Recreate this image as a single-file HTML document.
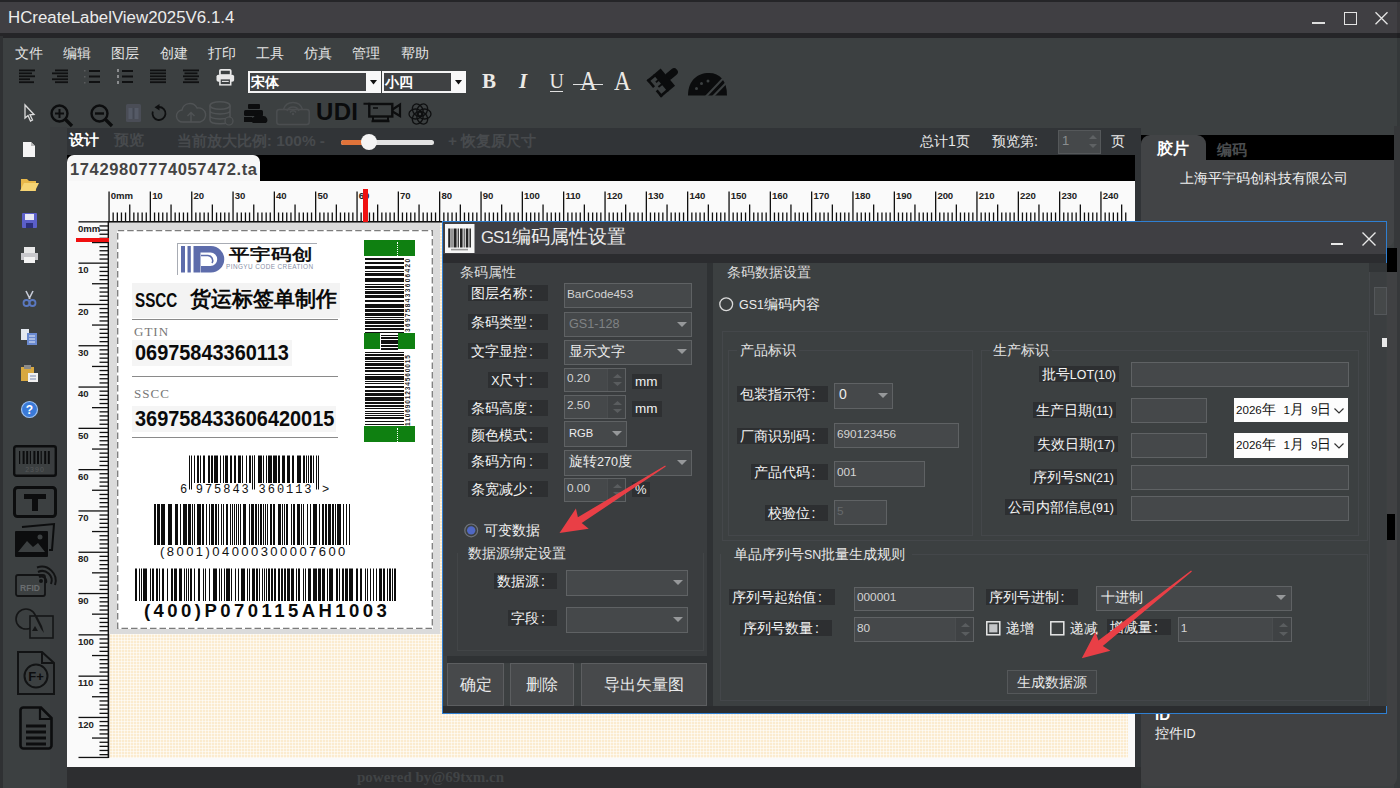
<!DOCTYPE html>
<html><head><meta charset="utf-8"><title>HCreateLabelView</title><style>
*{box-sizing:border-box;margin:0;padding:0}
html,body{width:1400px;height:788px;overflow:hidden;background:#3c4041;font-family:"Liberation Sans",sans-serif;color:#e6e6e6}
.a{position:absolute}
.t{position:absolute;white-space:nowrap;line-height:1}
.lbl{position:absolute;white-space:nowrap;line-height:16px;height:16px;font-size:14.1px;color:#f4f4f4;background:#2d2f31;text-align:right}
.inp{position:absolute;border:1px solid #5f6264;background:#45484a;font-size:11.8px;color:#d4d4d4;white-space:nowrap;padding-left:2px}
.cmb{position:absolute;border:1px solid #5f6264;background:#45484a;font-size:14px;color:#ededed;white-space:nowrap;padding-left:4px}
.cmb:after{content:"";position:absolute;right:4.500px;top:50%;margin-top:-3px;border:5px solid transparent;border-top:5.5px solid #96989a;border-bottom:0}
.spn:after{content:"";position:absolute;right:0;top:0;bottom:0;width:17.5px;background:#3f4244;border-left:1px solid #4a4d4f}
.btn{position:absolute;background:#47494b;border:1px solid #5c5e60;color:#e8e8e8;text-align:center;white-space:nowrap}
svg{position:absolute;overflow:visible}
</style></head><body>
<div class="a" style="left:0px;top:0px;width:1400px;height:37.5px;background:#252528"></div>
<div class="a" style="left:0px;top:2.3px;width:1400px;height:31.2px;background:#403f43"></div>
<div class="a" style="left:1397px;top:2.3px;width:3px;height:786px;background:rgba(0,0,0,.12)"></div>
<div class="t" style="left:8px;top:10px;font-size:16.85px;color:#ececec;">HCreateLabelView2025V6.1.4</div>
<div class="a" style="left:1312.3px;top:22px;width:12.5px;height:2.2px;background:#dedede"></div>
<div class="a" style="left:1343.8px;top:12px;width:13px;height:12.6px;border:1.5px solid #e4e4e4"></div>
<svg style="left:1375.4px;top:12px;" width="13" height="12.6" viewBox="0 0 13 12.6"><path d="M0.5 0.3L12.5 12.300M12.500 0.300L0.500 12.300" stroke="#e4e4e4" stroke-width="1.3"/></svg>
<div class="a" style="left:0px;top:36px;width:3px;height:752px;background:#2f3133"></div>
<div class="t" style="left:15.0px;top:46.5px;font-size:13.6px;color:#e4e4e4;">文件</div>
<div class="t" style="left:63.2px;top:46.5px;font-size:13.6px;color:#e4e4e4;">编辑</div>
<div class="t" style="left:111.4px;top:46.5px;font-size:13.6px;color:#e4e4e4;">图层</div>
<div class="t" style="left:159.60000000000002px;top:46.5px;font-size:13.6px;color:#e4e4e4;">创建</div>
<div class="t" style="left:207.8px;top:46.5px;font-size:13.6px;color:#e4e4e4;">打印</div>
<div class="t" style="left:256.0px;top:46.5px;font-size:13.6px;color:#e4e4e4;">工具</div>
<div class="t" style="left:304.20000000000005px;top:46.5px;font-size:13.6px;color:#e4e4e4;">仿真</div>
<div class="t" style="left:352.40000000000003px;top:46.5px;font-size:13.6px;color:#e4e4e4;">管理</div>
<div class="t" style="left:400.6px;top:46.5px;font-size:13.6px;color:#e4e4e4;">帮助</div>
<svg style="left:19px;top:69px;" width="16" height="14" viewBox="0 0 16 14"><rect x="0" y="0.5" width="16" height="1.8" fill="#101112"/><rect x="0" y="3.45" width="13" height="1.8" fill="#101112"/><rect x="0" y="6.4" width="16" height="1.8" fill="#101112"/><rect x="0" y="9.350000000000001" width="11" height="1.8" fill="#101112"/><rect x="0" y="12.3" width="15" height="1.8" fill="#101112"/></svg>
<svg style="left:52px;top:69px;" width="16" height="14" viewBox="0 0 16 14"><rect x="3" y="0.5" width="13" height="1.8" fill="#101112"/><rect x="0" y="3.45" width="16" height="1.8" fill="#101112"/><rect x="5" y="6.4" width="11" height="1.8" fill="#101112"/><rect x="0" y="9.350000000000001" width="16" height="1.8" fill="#101112"/><rect x="3" y="12.3" width="13" height="1.8" fill="#101112"/></svg>
<svg style="left:84px;top:69px;" width="16" height="15" viewBox="0 0 16 15"><rect x="5" y="1.0" width="11" height="2" fill="#101112"/><rect x="5" y="6.5" width="11" height="2" fill="#101112"/><rect x="5" y="12.0" width="11" height="2" fill="#101112"/></svg>
<svg style="left:117px;top:69px;" width="16" height="15" viewBox="0 0 16 15"><rect x="5" y="1.0" width="11" height="2" fill="#101112"/><rect x="5" y="6.5" width="11" height="2" fill="#101112"/><rect x="5" y="12.0" width="11" height="2" fill="#101112"/></svg>
<svg style="left:150px;top:69px;" width="16" height="14" viewBox="0 0 16 14"><rect x="0" y="0.5" width="16" height="1.8" fill="#101112"/><rect x="0" y="3.45" width="16" height="1.8" fill="#101112"/><rect x="0" y="6.4" width="16" height="1.8" fill="#101112"/><rect x="0" y="9.350000000000001" width="16" height="1.8" fill="#101112"/><rect x="0" y="12.3" width="16" height="1.8" fill="#101112"/></svg>
<svg style="left:183px;top:69px;" width="16" height="14" viewBox="0 0 16 14"><rect x="0" y="0.5" width="16" height="1.8" fill="#101112"/><rect x="1.5" y="3.45" width="13" height="1.8" fill="#101112"/><rect x="0" y="6.4" width="16" height="1.8" fill="#101112"/><rect x="1.5" y="9.350000000000001" width="13" height="1.8" fill="#101112"/><rect x="0" y="12.3" width="16" height="1.8" fill="#101112"/></svg>
<svg style="left:84px;top:70px;" width="3" height="14" viewBox="0 0 3 14"><rect x="0" y="0" width="1.5" height="1.5" fill="#5a5c5e"/><rect x="0" y="6" width="1.5" height="1.5" fill="#5a5c5e"/><rect x="0" y="12" width="1.5" height="1.5" fill="#5a5c5e"/></svg>
<svg style="left:117px;top:69px;" width="3" height="15" viewBox="0 0 3 15"><rect x="0" y="0" width="2" height="3" fill="#8a8c8e"/><rect x="0" y="6" width="2" height="3" fill="#8a8c8e"/><rect x="0" y="12" width="2" height="3" fill="#8a8c8e"/></svg>
<svg style="left:216px;top:69px;" width="20" height="20" viewBox="0 0 20 20"><g transform="scale(.98,.88)"><rect x="4" y="1" width="11" height="6" rx="1" fill="none" stroke="#e8e8e8" stroke-width="1.8"/><rect x="0.5" y="6.5" width="18" height="8" rx="2" fill="#e8e8e8"/><rect x="4" y="11" width="11" height="7" fill="#3c4041" stroke="#e8e8e8" stroke-width="1.6"/><rect x="6" y="13.5" width="7" height="1.2" fill="#e8e8e8"/></g></svg>
<div class="a" style="left:248px;top:71px;width:133px;height:22px;border:2px solid #f4f4f4;background:#3f4143"></div>
<div class="a" style="left:366px;top:71px;width:15px;height:22px;background:#f8f8f8"></div>
<svg style="left:370px;top:80px;" width="7" height="5" viewBox="0 0 7 5"><path d="M0 0H7L3.5 4.5Z" fill="#111"/></svg>
<div class="t" style="left:251px;top:75px;font-size:14px;color:#fff;font-weight:bold">宋体</div>
<div class="a" style="left:382px;top:71px;width:84px;height:22px;border:2px solid #f4f4f4;background:#3f4143"></div>
<div class="a" style="left:451px;top:71px;width:15px;height:22px;background:#f8f8f8"></div>
<svg style="left:455px;top:80px;" width="7" height="5" viewBox="0 0 7 5"><path d="M0 0H7L3.5 4.5Z" fill="#111"/></svg>
<div class="t" style="left:385px;top:75px;font-size:14px;color:#fff;font-weight:bold">小四</div>
<div class="t" style="left:482px;top:71px;font-size:21px;color:#eceae6;font-family:'Liberation Serif',serif;font-weight:bold">B</div>
<div class="t" style="left:519px;top:71px;font-size:21px;color:#eceae6;font-family:'Liberation Serif',serif;font-style:italic;font-weight:bold">I</div>
<div class="t" style="left:549.5px;top:71px;font-size:20px;color:#eceae6;font-family:'Liberation Serif',serif;">U</div>
<div class="a" style="left:550px;top:90.5px;width:12.5px;height:1.2px;background:#e0e0e0"></div>
<div class="t" style="left:579.5px;top:67.5px;font-size:27px;color:#eceae6;font-family:'Liberation Serif',serif;transform-origin:0 0;transform:scaleX(.86)">A</div>
<div class="a" style="left:573px;top:83.5px;width:30px;height:1.5px;background:#e0e0e0"></div>
<div class="t" style="left:614px;top:67.5px;font-size:27px;color:#eceae6;font-family:'Liberation Serif',serif;transform-origin:0 0;transform:scaleX(.86)">A</div>
<svg style="left:0px;top:0px;" width="1400" height="120" viewBox="0 0 1400 120"><g transform="translate(661.5,82.5) rotate(50) scale(1.18)" fill="#0b0c0d"><rect x="-3.2" y="-17" width="6.4" height="12" rx="3"/><rect x="-9.5" y="-7" width="19" height="8"/><rect x="-9.5" y="0" width="2.4" height="8.5"/><rect x="-9.5" y="6.3" width="8.5" height="2.2"/><rect x="2.5" y="6.3" width="7" height="2.2"/><rect x="7.2" y="0" width="2.300" height="8.500"/><rect x="-4" y="0" width="1.6" height="3.5"/><rect x="0.5" y="0" width="1.6" height="4.500"/></g></svg>
<svg style="left:688px;top:72.5px;" width="40" height="23" viewBox="0 0 40 23"><path d="M0 22.500C0 8 9 0 21 0C32 0 39 8 39 22.500Z" fill="#0b0c0d"/><path d="M17.500 24L37 3.500M24.500 24L40.500 7.500" stroke="#3c4041" stroke-width="2"/><circle cx="8.500" cy="15.500" r="1.500" fill="#3c4041"/><circle cx="13.500" cy="10.500" r="1.500" fill="#3c4041"/><circle cx="20" cy="8" r="1.500" fill="#3c4041"/></svg>
<svg style="left:24px;top:104.5px;" width="12" height="17" viewBox="0 0 12 17"><path d="M1 0V13L4 10.5L6.5 16L8.5 15L6 9.8L10 9.5Z" fill="#3c4041" stroke="#dcdcdc" stroke-width="1.3"/></svg>
<svg style="left:49.5px;top:103.5px;" width="24" height="24" viewBox="0 0 24 24"><circle cx="9.5" cy="9.5" r="8" fill="none" stroke="#0c0d0e" stroke-width="2.4"/><path d="M15.5 15.5L22 22" stroke="#0c0d0e" stroke-width="3.4"/><path d="M5 9.5H14M9.5 5V14" stroke="#0c0d0e" stroke-width="2"/></svg>
<svg style="left:89.5px;top:103.5px;" width="24" height="24" viewBox="0 0 24 24"><circle cx="9.5" cy="9.5" r="8" fill="none" stroke="#0c0d0e" stroke-width="2.4"/><path d="M15.5 15.5L22 22" stroke="#0c0d0e" stroke-width="3.4"/><path d="M5 9.5H14" stroke="#0c0d0e" stroke-width="2.4"/></svg>
<svg style="left:126px;top:104px;" width="15" height="18" viewBox="0 0 15 18"><rect x="0" y="0" width="15" height="18" rx="1.5" fill="#4a4d56"/><rect x="2.5" y="4" width="10" height="11" fill="#555a66"/><rect x="6.5" y="4" width="2" height="11" fill="#444852"/></svg>
<svg style="left:151px;top:104px;" width="16" height="17" viewBox="0 0 16 17"><path d="M8 3A6.5 6.5 0 1 1 1.8 7.5" fill="none" stroke="#0e0f10" stroke-width="1.8"/><path d="M8.5 0V6.5L3.5 3.2Z" fill="#0e0f10"/></svg>
<svg style="left:176px;top:102px;" width="30" height="22" viewBox="0 0 30 22"><path d="M7 20A6 6 0 0 1 6 8A8 8 0 0 1 21 6A7 7 0 0 1 24 20Z" fill="none" stroke="#505355" stroke-width="1.4"/><path d="M15 20V11M11.5 14L15 10.5 18.5 14" fill="none" stroke="#505355" stroke-width="1.4"/></svg>
<svg style="left:209px;top:101px;" width="26" height="26" viewBox="0 0 26 26"><ellipse cx="11" cy="4.5" rx="10" ry="3.8" fill="none" stroke="#505355" stroke-width="1.5"/><path d="M1 4.5V19C1 24 21 24 21 19V4.5M1 9.5C1 14 21 14 21 9.5M1 14.5C1 19 21 19 21 14.5" fill="none" stroke="#505355" stroke-width="1.5"/><circle cx="20" cy="20" r="4" fill="#3c4041" stroke="#505355" stroke-width="1.2"/></svg>
<svg style="left:243px;top:104px;" width="26" height="20" viewBox="0 0 26 20"><rect x="5" y="0" width="12" height="5" rx="1" fill="#0c0d0e"/><rect x="1" y="6" width="19" height="6" rx="1.5" fill="#0c0d0e"/><rect x="1" y="13" width="8" height="5" fill="#0c0d0e"/><path d="M10 19A3.2 3.2 0 0 1 11 13A5 5 0 0 1 20 12A4 4 0 0 1 23 19Z" fill="#0c0d0e"/></svg>
<svg style="left:276px;top:100px;" width="34" height="26" viewBox="0 0 34 26"><g fill="none" stroke="#4b4e50" stroke-width="1.500"><rect x="0.800" y="9.500" width="32.400" height="15" rx="2.500"/><path d="M7.500 9.500A10 10 0 0 1 26.500 9.500M11 11A6.500 6.500 0 0 1 23 11M14 12.500A3.500 3.500 0 0 1 20 12.500"/></g><circle cx="17" cy="14" r="1.200" fill="#4b4e50"/></svg>
<div class="t" style="left:316px;top:99.5px;font-size:24px;color:#0a0b0c;font-weight:bold;letter-spacing:0.3px">UDI</div>
<svg style="left:363px;top:102px;" width="40" height="22" viewBox="0 0 40 22"><g fill="none" stroke="#0c0d0e"><rect x="6.300" y="2" width="23" height="12.500" stroke-width="2.400"/><path d="M0.500 1.800H6V4.500" stroke-width="2"/><path d="M29.500 7.500L37 2.500V14L29.500 9.500" stroke-width="2.200"/><path d="M10 15V18.500H25V15M8.500 19.300H26.500" stroke-width="2"/><path d="M10 6H15" stroke-width="1.600"/></g></svg>
<svg style="left:408px;top:102px;" width="24" height="24" viewBox="0 0 24 24"><g fill="none" stroke="#0e0f10" stroke-width="1.3"><ellipse cx="12" cy="7.5" rx="5" ry="6.5" transform="rotate(30 12 12)"/><ellipse cx="12" cy="7.5" rx="5" ry="6.5" transform="rotate(150 12 12)"/><ellipse cx="12" cy="7.5" rx="5" ry="6.5" transform="rotate(270 12 12)"/><ellipse cx="12" cy="16.5" rx="5" ry="6.5" transform="rotate(30 12 12)"/><ellipse cx="12" cy="16.5" rx="5" ry="6.5" transform="rotate(150 12 12)"/><ellipse cx="12" cy="16.5" rx="5" ry="6.5" transform="rotate(270 12 12)"/></g></svg>
<div class="a" style="left:50px;top:127px;width:17px;height:661px;background:#3a3d3f"></div>
<div class="a" style="left:67px;top:127.5px;width:1074px;height:661px;background:#313437"></div>
<div class="a" style="left:67px;top:767px;width:1074px;height:21px;background:#2d2e30"></div>
<div class="t" style="left:68.8px;top:132.5px;font-size:14.6px;color:#ffffff;font-weight:bold">设计</div>
<div class="t" style="left:114px;top:133px;font-size:14.5px;color:#474a4d;font-weight:bold">预览</div>
<div class="t" style="left:176.8px;top:132.5px;font-size:15.4px;color:#474a4d;font-weight:bold">当前放大比例: 100% -</div>
<div class="a" style="left:341px;top:140px;width:93px;height:5px;background:#e3e3e3;border-radius:3px"></div>
<div class="a" style="left:341px;top:140px;width:24px;height:5px;background:#e0733a;border-radius:3px"></div>
<div class="a" style="left:361px;top:134px;width:16px;height:16px;background:#f4f4f4;border-radius:8px"></div>
<div class="t" style="left:448px;top:132.5px;font-size:15.4px;color:#474a4d;font-weight:bold">+ 恢复原尺寸</div>
<div class="t" style="left:920px;top:134px;font-size:14px;color:#eaeaea;">总计1页</div>
<div class="t" style="left:992px;top:134px;font-size:14px;color:#eaeaea;">预览第:</div>
<div class="a" style="left:1058px;top:130px;width:43px;height:24px;background:#45484a;border:1px solid #55585a"></div>
<div class="t" style="left:1062px;top:134px;font-size:13px;color:#8a8d8f;">1</div>
<svg style="left:1089px;top:134px;" width="8" height="16" viewBox="0 0 8 16"><path d="M0 5L4 1 8 5ZM0 10L4 14 8 10Z" fill="#5f6264"/></svg>
<div class="t" style="left:1111px;top:134px;font-size:14px;color:#eaeaea;">页</div>
<div class="a" style="left:67px;top:155px;width:1068px;height:26px;background:#000"></div>
<div class="a" style="left:67px;top:155px;width:193px;height:27px;background:#f7f7f7;border-radius:7px 7px 0 0"></div>
<div class="t" style="left:70px;top:161px;font-size:16.5px;color:#444;font-weight:bold;letter-spacing:0.62px">17429807774057472.ta</div>
<div class="a" style="left:67px;top:181px;width:1068px;height:586px;background:#fafafa"></div>
<div class="t" style="left:357px;top:769.5px;font-size:15px;color:#414446;font-weight:bold;font-family:'Liberation Serif',serif">powered by@69txm.cn</div>
<div class="a" style="left:109px;top:222.6px;width:1019px;height:535.4px;background-color:#fbebcf;background-image:linear-gradient(90deg,rgba(255,255,255,.55) 1px,transparent 1px),linear-gradient(rgba(255,255,255,.55) 1px,transparent 1px);background-size:3px 3px"></div>
<svg style="left:0px;top:0px;" width="1400" height="230" viewBox="0 0 1400 230"><rect x="108.4" y="191.5" width="1.3" height="30.5" fill="#111"/><rect x="112.5" y="212.5" width="1.3" height="9.5" fill="#111"/><rect x="116.7" y="212.5" width="1.3" height="9.5" fill="#111"/><rect x="120.8" y="212.5" width="1.3" height="9.5" fill="#111"/><rect x="124.9" y="212.5" width="1.3" height="9.5" fill="#111"/><rect x="129.1" y="204.5" width="1.3" height="17.5" fill="#111"/><rect x="133.2" y="212.5" width="1.3" height="9.5" fill="#111"/><rect x="137.3" y="212.5" width="1.3" height="9.5" fill="#111"/><rect x="141.5" y="212.5" width="1.3" height="9.5" fill="#111"/><rect x="145.6" y="212.5" width="1.3" height="9.5" fill="#111"/><rect x="149.7" y="191.5" width="1.3" height="30.5" fill="#111"/><rect x="153.9" y="212.5" width="1.3" height="9.5" fill="#111"/><rect x="158.0" y="212.5" width="1.3" height="9.5" fill="#111"/><rect x="162.1" y="212.5" width="1.3" height="9.5" fill="#111"/><rect x="166.3" y="212.5" width="1.3" height="9.5" fill="#111"/><rect x="170.4" y="204.5" width="1.3" height="17.5" fill="#111"/><rect x="174.5" y="212.5" width="1.3" height="9.5" fill="#111"/><rect x="178.7" y="212.5" width="1.3" height="9.5" fill="#111"/><rect x="182.8" y="212.5" width="1.3" height="9.5" fill="#111"/><rect x="186.9" y="212.5" width="1.3" height="9.5" fill="#111"/><rect x="191.1" y="191.5" width="1.3" height="30.5" fill="#111"/><rect x="195.2" y="212.5" width="1.3" height="9.5" fill="#111"/><rect x="199.3" y="212.5" width="1.3" height="9.5" fill="#111"/><rect x="203.5" y="212.5" width="1.3" height="9.5" fill="#111"/><rect x="207.6" y="212.5" width="1.3" height="9.5" fill="#111"/><rect x="211.7" y="204.5" width="1.3" height="17.5" fill="#111"/><rect x="215.9" y="212.5" width="1.3" height="9.5" fill="#111"/><rect x="220.0" y="212.5" width="1.3" height="9.5" fill="#111"/><rect x="224.1" y="212.5" width="1.3" height="9.5" fill="#111"/><rect x="228.3" y="212.5" width="1.3" height="9.5" fill="#111"/><rect x="232.4" y="191.5" width="1.3" height="30.5" fill="#111"/><rect x="236.5" y="212.5" width="1.3" height="9.5" fill="#111"/><rect x="240.7" y="212.5" width="1.3" height="9.5" fill="#111"/><rect x="244.8" y="212.5" width="1.3" height="9.5" fill="#111"/><rect x="248.9" y="212.5" width="1.3" height="9.5" fill="#111"/><rect x="253.1" y="204.5" width="1.3" height="17.5" fill="#111"/><rect x="257.2" y="212.5" width="1.3" height="9.5" fill="#111"/><rect x="261.3" y="212.5" width="1.3" height="9.5" fill="#111"/><rect x="265.5" y="212.5" width="1.3" height="9.5" fill="#111"/><rect x="269.6" y="212.5" width="1.3" height="9.5" fill="#111"/><rect x="273.7" y="191.5" width="1.3" height="30.5" fill="#111"/><rect x="277.9" y="212.5" width="1.3" height="9.5" fill="#111"/><rect x="282.0" y="212.5" width="1.3" height="9.5" fill="#111"/><rect x="286.1" y="212.5" width="1.3" height="9.5" fill="#111"/><rect x="290.3" y="212.5" width="1.3" height="9.5" fill="#111"/><rect x="294.4" y="204.5" width="1.3" height="17.5" fill="#111"/><rect x="298.5" y="212.5" width="1.3" height="9.5" fill="#111"/><rect x="302.7" y="212.5" width="1.3" height="9.5" fill="#111"/><rect x="306.8" y="212.5" width="1.3" height="9.5" fill="#111"/><rect x="310.9" y="212.5" width="1.3" height="9.5" fill="#111"/><rect x="315.0" y="191.5" width="1.3" height="30.5" fill="#111"/><rect x="319.2" y="212.5" width="1.3" height="9.5" fill="#111"/><rect x="323.3" y="212.5" width="1.3" height="9.5" fill="#111"/><rect x="327.4" y="212.5" width="1.3" height="9.5" fill="#111"/><rect x="331.6" y="212.5" width="1.3" height="9.5" fill="#111"/><rect x="335.7" y="204.5" width="1.3" height="17.5" fill="#111"/><rect x="339.8" y="212.5" width="1.3" height="9.5" fill="#111"/><rect x="344.0" y="212.5" width="1.3" height="9.5" fill="#111"/><rect x="348.1" y="212.5" width="1.3" height="9.5" fill="#111"/><rect x="352.2" y="212.5" width="1.3" height="9.5" fill="#111"/><rect x="356.4" y="191.5" width="1.3" height="30.5" fill="#111"/><rect x="360.5" y="212.5" width="1.3" height="9.5" fill="#111"/><rect x="364.6" y="212.5" width="1.3" height="9.5" fill="#111"/><rect x="368.8" y="212.5" width="1.3" height="9.5" fill="#111"/><rect x="372.9" y="212.5" width="1.3" height="9.5" fill="#111"/><rect x="377.0" y="204.5" width="1.3" height="17.5" fill="#111"/><rect x="381.2" y="212.5" width="1.3" height="9.5" fill="#111"/><rect x="385.3" y="212.5" width="1.3" height="9.5" fill="#111"/><rect x="389.4" y="212.5" width="1.3" height="9.5" fill="#111"/><rect x="393.6" y="212.5" width="1.3" height="9.5" fill="#111"/><rect x="397.7" y="191.5" width="1.3" height="30.5" fill="#111"/><rect x="401.8" y="212.5" width="1.3" height="9.5" fill="#111"/><rect x="406.0" y="212.5" width="1.3" height="9.5" fill="#111"/><rect x="410.1" y="212.5" width="1.3" height="9.5" fill="#111"/><rect x="414.2" y="212.5" width="1.3" height="9.5" fill="#111"/><rect x="418.4" y="204.5" width="1.3" height="17.5" fill="#111"/><rect x="422.5" y="212.5" width="1.3" height="9.5" fill="#111"/><rect x="426.6" y="212.5" width="1.3" height="9.5" fill="#111"/><rect x="430.8" y="212.5" width="1.3" height="9.5" fill="#111"/><rect x="434.9" y="212.5" width="1.3" height="9.5" fill="#111"/><rect x="439.0" y="191.5" width="1.3" height="30.5" fill="#111"/><rect x="443.2" y="212.5" width="1.3" height="9.5" fill="#111"/><rect x="447.3" y="212.5" width="1.3" height="9.5" fill="#111"/><rect x="451.4" y="212.5" width="1.3" height="9.5" fill="#111"/><rect x="455.6" y="212.5" width="1.3" height="9.5" fill="#111"/><rect x="459.7" y="204.5" width="1.3" height="17.5" fill="#111"/><rect x="463.8" y="212.5" width="1.3" height="9.5" fill="#111"/><rect x="468.0" y="212.5" width="1.3" height="9.5" fill="#111"/><rect x="472.1" y="212.5" width="1.3" height="9.5" fill="#111"/><rect x="476.2" y="212.5" width="1.3" height="9.5" fill="#111"/><rect x="480.4" y="191.5" width="1.3" height="30.5" fill="#111"/><rect x="484.5" y="212.5" width="1.3" height="9.5" fill="#111"/><rect x="488.6" y="212.5" width="1.3" height="9.5" fill="#111"/><rect x="492.8" y="212.5" width="1.3" height="9.5" fill="#111"/><rect x="496.9" y="212.5" width="1.3" height="9.5" fill="#111"/><rect x="501.0" y="204.5" width="1.3" height="17.5" fill="#111"/><rect x="505.2" y="212.5" width="1.3" height="9.5" fill="#111"/><rect x="509.3" y="212.5" width="1.3" height="9.5" fill="#111"/><rect x="513.4" y="212.5" width="1.3" height="9.5" fill="#111"/><rect x="517.6" y="212.5" width="1.3" height="9.5" fill="#111"/><rect x="521.7" y="191.5" width="1.3" height="30.5" fill="#111"/><rect x="525.8" y="212.5" width="1.3" height="9.5" fill="#111"/><rect x="530.0" y="212.5" width="1.3" height="9.5" fill="#111"/><rect x="534.1" y="212.5" width="1.3" height="9.5" fill="#111"/><rect x="538.2" y="212.5" width="1.3" height="9.5" fill="#111"/><rect x="542.4" y="204.5" width="1.3" height="17.5" fill="#111"/><rect x="546.5" y="212.5" width="1.3" height="9.5" fill="#111"/><rect x="550.6" y="212.5" width="1.3" height="9.5" fill="#111"/><rect x="554.8" y="212.5" width="1.3" height="9.5" fill="#111"/><rect x="558.9" y="212.5" width="1.3" height="9.5" fill="#111"/><rect x="563.0" y="191.5" width="1.3" height="30.5" fill="#111"/><rect x="567.2" y="212.5" width="1.3" height="9.5" fill="#111"/><rect x="571.3" y="212.5" width="1.3" height="9.5" fill="#111"/><rect x="575.4" y="212.5" width="1.3" height="9.5" fill="#111"/><rect x="579.6" y="212.5" width="1.3" height="9.5" fill="#111"/><rect x="583.7" y="204.5" width="1.3" height="17.5" fill="#111"/><rect x="587.8" y="212.5" width="1.3" height="9.5" fill="#111"/><rect x="592.0" y="212.5" width="1.3" height="9.5" fill="#111"/><rect x="596.1" y="212.5" width="1.3" height="9.5" fill="#111"/><rect x="600.2" y="212.5" width="1.3" height="9.5" fill="#111"/><rect x="604.4" y="191.5" width="1.3" height="30.5" fill="#111"/><rect x="608.5" y="212.5" width="1.3" height="9.5" fill="#111"/><rect x="612.6" y="212.5" width="1.3" height="9.5" fill="#111"/><rect x="616.8" y="212.5" width="1.3" height="9.5" fill="#111"/><rect x="620.9" y="212.5" width="1.3" height="9.5" fill="#111"/><rect x="625.0" y="204.5" width="1.3" height="17.5" fill="#111"/><rect x="629.2" y="212.5" width="1.3" height="9.5" fill="#111"/><rect x="633.3" y="212.5" width="1.3" height="9.5" fill="#111"/><rect x="637.4" y="212.5" width="1.3" height="9.5" fill="#111"/><rect x="641.6" y="212.5" width="1.3" height="9.5" fill="#111"/><rect x="645.7" y="191.5" width="1.3" height="30.5" fill="#111"/><rect x="649.8" y="212.5" width="1.3" height="9.5" fill="#111"/><rect x="654.0" y="212.5" width="1.3" height="9.5" fill="#111"/><rect x="658.1" y="212.5" width="1.3" height="9.5" fill="#111"/><rect x="662.2" y="212.5" width="1.3" height="9.5" fill="#111"/><rect x="666.4" y="204.5" width="1.3" height="17.5" fill="#111"/><rect x="670.5" y="212.5" width="1.3" height="9.5" fill="#111"/><rect x="674.6" y="212.5" width="1.3" height="9.5" fill="#111"/><rect x="678.8" y="212.5" width="1.3" height="9.5" fill="#111"/><rect x="682.9" y="212.5" width="1.3" height="9.5" fill="#111"/><rect x="687.0" y="191.5" width="1.3" height="30.5" fill="#111"/><rect x="691.2" y="212.5" width="1.3" height="9.5" fill="#111"/><rect x="695.3" y="212.5" width="1.3" height="9.5" fill="#111"/><rect x="699.4" y="212.5" width="1.3" height="9.5" fill="#111"/><rect x="703.6" y="212.5" width="1.3" height="9.5" fill="#111"/><rect x="707.7" y="204.5" width="1.3" height="17.5" fill="#111"/><rect x="711.8" y="212.5" width="1.3" height="9.5" fill="#111"/><rect x="716.0" y="212.5" width="1.3" height="9.5" fill="#111"/><rect x="720.1" y="212.5" width="1.3" height="9.5" fill="#111"/><rect x="724.2" y="212.5" width="1.3" height="9.5" fill="#111"/><rect x="728.4" y="191.5" width="1.3" height="30.5" fill="#111"/><rect x="732.5" y="212.5" width="1.3" height="9.5" fill="#111"/><rect x="736.6" y="212.5" width="1.3" height="9.5" fill="#111"/><rect x="740.7" y="212.5" width="1.3" height="9.5" fill="#111"/><rect x="744.9" y="212.5" width="1.3" height="9.5" fill="#111"/><rect x="749.0" y="204.5" width="1.3" height="17.5" fill="#111"/><rect x="753.1" y="212.5" width="1.3" height="9.5" fill="#111"/><rect x="757.3" y="212.5" width="1.3" height="9.5" fill="#111"/><rect x="761.4" y="212.5" width="1.3" height="9.5" fill="#111"/><rect x="765.5" y="212.5" width="1.3" height="9.5" fill="#111"/><rect x="769.7" y="191.5" width="1.3" height="30.5" fill="#111"/><rect x="773.8" y="212.5" width="1.3" height="9.5" fill="#111"/><rect x="777.9" y="212.5" width="1.3" height="9.5" fill="#111"/><rect x="782.1" y="212.5" width="1.3" height="9.5" fill="#111"/><rect x="786.2" y="212.5" width="1.3" height="9.5" fill="#111"/><rect x="790.3" y="204.5" width="1.3" height="17.5" fill="#111"/><rect x="794.5" y="212.5" width="1.3" height="9.5" fill="#111"/><rect x="798.6" y="212.5" width="1.3" height="9.5" fill="#111"/><rect x="802.7" y="212.5" width="1.3" height="9.5" fill="#111"/><rect x="806.9" y="212.5" width="1.3" height="9.5" fill="#111"/><rect x="811.0" y="191.5" width="1.3" height="30.5" fill="#111"/><rect x="815.1" y="212.5" width="1.3" height="9.5" fill="#111"/><rect x="819.3" y="212.5" width="1.3" height="9.5" fill="#111"/><rect x="823.4" y="212.5" width="1.3" height="9.5" fill="#111"/><rect x="827.5" y="212.5" width="1.3" height="9.5" fill="#111"/><rect x="831.7" y="204.5" width="1.3" height="17.5" fill="#111"/><rect x="835.8" y="212.5" width="1.3" height="9.5" fill="#111"/><rect x="839.9" y="212.5" width="1.3" height="9.5" fill="#111"/><rect x="844.1" y="212.5" width="1.3" height="9.5" fill="#111"/><rect x="848.2" y="212.5" width="1.3" height="9.5" fill="#111"/><rect x="852.3" y="191.5" width="1.3" height="30.5" fill="#111"/><rect x="856.5" y="212.5" width="1.3" height="9.5" fill="#111"/><rect x="860.6" y="212.5" width="1.3" height="9.5" fill="#111"/><rect x="864.7" y="212.5" width="1.3" height="9.5" fill="#111"/><rect x="868.9" y="212.5" width="1.3" height="9.5" fill="#111"/><rect x="873.0" y="204.5" width="1.3" height="17.5" fill="#111"/><rect x="877.1" y="212.5" width="1.3" height="9.5" fill="#111"/><rect x="881.3" y="212.5" width="1.3" height="9.5" fill="#111"/><rect x="885.4" y="212.5" width="1.3" height="9.5" fill="#111"/><rect x="889.5" y="212.5" width="1.3" height="9.5" fill="#111"/><rect x="893.7" y="191.5" width="1.3" height="30.5" fill="#111"/><rect x="897.8" y="212.5" width="1.3" height="9.5" fill="#111"/><rect x="901.9" y="212.5" width="1.3" height="9.5" fill="#111"/><rect x="906.1" y="212.5" width="1.3" height="9.5" fill="#111"/><rect x="910.2" y="212.5" width="1.3" height="9.5" fill="#111"/><rect x="914.3" y="204.5" width="1.3" height="17.5" fill="#111"/><rect x="918.5" y="212.5" width="1.3" height="9.5" fill="#111"/><rect x="922.6" y="212.5" width="1.3" height="9.5" fill="#111"/><rect x="926.7" y="212.5" width="1.3" height="9.5" fill="#111"/><rect x="930.9" y="212.5" width="1.3" height="9.5" fill="#111"/><rect x="935.0" y="191.5" width="1.3" height="30.5" fill="#111"/><rect x="939.1" y="212.5" width="1.3" height="9.5" fill="#111"/><rect x="943.3" y="212.5" width="1.3" height="9.5" fill="#111"/><rect x="947.4" y="212.5" width="1.3" height="9.5" fill="#111"/><rect x="951.5" y="212.5" width="1.3" height="9.5" fill="#111"/><rect x="955.7" y="204.5" width="1.3" height="17.5" fill="#111"/><rect x="959.8" y="212.5" width="1.3" height="9.5" fill="#111"/><rect x="963.9" y="212.5" width="1.3" height="9.5" fill="#111"/><rect x="968.1" y="212.5" width="1.3" height="9.5" fill="#111"/><rect x="972.2" y="212.5" width="1.3" height="9.5" fill="#111"/><rect x="976.3" y="191.5" width="1.3" height="30.5" fill="#111"/><rect x="980.5" y="212.5" width="1.3" height="9.5" fill="#111"/><rect x="984.6" y="212.5" width="1.3" height="9.5" fill="#111"/><rect x="988.7" y="212.5" width="1.3" height="9.5" fill="#111"/><rect x="992.9" y="212.5" width="1.3" height="9.5" fill="#111"/><rect x="997.0" y="204.5" width="1.3" height="17.5" fill="#111"/><rect x="1001.1" y="212.5" width="1.3" height="9.5" fill="#111"/><rect x="1005.3" y="212.5" width="1.3" height="9.5" fill="#111"/><rect x="1009.4" y="212.5" width="1.3" height="9.5" fill="#111"/><rect x="1013.5" y="212.5" width="1.3" height="9.5" fill="#111"/><rect x="1017.7" y="191.5" width="1.3" height="30.5" fill="#111"/><rect x="1021.8" y="212.5" width="1.3" height="9.5" fill="#111"/><rect x="1025.9" y="212.5" width="1.3" height="9.5" fill="#111"/><rect x="1030.1" y="212.5" width="1.3" height="9.5" fill="#111"/><rect x="1034.2" y="212.5" width="1.3" height="9.5" fill="#111"/><rect x="1038.3" y="204.5" width="1.3" height="17.5" fill="#111"/><rect x="1042.5" y="212.5" width="1.3" height="9.5" fill="#111"/><rect x="1046.6" y="212.5" width="1.3" height="9.5" fill="#111"/><rect x="1050.7" y="212.5" width="1.3" height="9.5" fill="#111"/><rect x="1054.9" y="212.5" width="1.3" height="9.5" fill="#111"/><rect x="1059.0" y="191.5" width="1.3" height="30.5" fill="#111"/><rect x="1063.1" y="212.5" width="1.3" height="9.5" fill="#111"/><rect x="1067.3" y="212.5" width="1.3" height="9.5" fill="#111"/><rect x="1071.4" y="212.5" width="1.3" height="9.5" fill="#111"/><rect x="1075.5" y="212.5" width="1.3" height="9.5" fill="#111"/><rect x="1079.7" y="204.5" width="1.3" height="17.5" fill="#111"/><rect x="1083.8" y="212.5" width="1.3" height="9.5" fill="#111"/><rect x="1087.9" y="212.5" width="1.3" height="9.5" fill="#111"/><rect x="1092.1" y="212.5" width="1.3" height="9.5" fill="#111"/><rect x="1096.2" y="212.5" width="1.3" height="9.5" fill="#111"/><rect x="1100.3" y="191.5" width="1.3" height="30.5" fill="#111"/><rect x="1104.5" y="212.5" width="1.3" height="9.5" fill="#111"/><rect x="1108.6" y="212.5" width="1.3" height="9.5" fill="#111"/><rect x="1112.7" y="212.5" width="1.3" height="9.5" fill="#111"/><rect x="1116.9" y="212.5" width="1.3" height="9.5" fill="#111"/><rect x="1121.0" y="204.5" width="1.3" height="17.5" fill="#111"/><rect x="1125.1" y="212.5" width="1.3" height="9.5" fill="#111"/><rect x="108" y="221" width="1027" height="1.6" fill="#111"/></svg>
<div class="t" style="left:110.8px;top:191px;font-size:9.6px;color:#222;font-weight:bold;letter-spacing:-0.1px">0mm</div>
<div class="t" style="left:152.13px;top:191px;font-size:9.6px;color:#222;font-weight:bold;letter-spacing:-0.1px">10</div>
<div class="t" style="left:193.46px;top:191px;font-size:9.6px;color:#222;font-weight:bold;letter-spacing:-0.1px">20</div>
<div class="t" style="left:234.79000000000002px;top:191px;font-size:9.6px;color:#222;font-weight:bold;letter-spacing:-0.1px">30</div>
<div class="t" style="left:276.12px;top:191px;font-size:9.6px;color:#222;font-weight:bold;letter-spacing:-0.1px">40</div>
<div class="t" style="left:317.45px;top:191px;font-size:9.6px;color:#222;font-weight:bold;letter-spacing:-0.1px">50</div>
<div class="t" style="left:358.78000000000003px;top:191px;font-size:9.6px;color:#222;font-weight:bold;letter-spacing:-0.1px">60</div>
<div class="t" style="left:400.11px;top:191px;font-size:9.6px;color:#222;font-weight:bold;letter-spacing:-0.1px">70</div>
<div class="t" style="left:441.44px;top:191px;font-size:9.6px;color:#222;font-weight:bold;letter-spacing:-0.1px">80</div>
<div class="t" style="left:482.77000000000004px;top:191px;font-size:9.6px;color:#222;font-weight:bold;letter-spacing:-0.1px">90</div>
<div class="t" style="left:524.0999999999999px;top:191px;font-size:9.6px;color:#222;font-weight:bold;letter-spacing:-0.1px">100</div>
<div class="t" style="left:565.43px;top:191px;font-size:9.6px;color:#222;font-weight:bold;letter-spacing:-0.1px">110</div>
<div class="t" style="left:606.76px;top:191px;font-size:9.6px;color:#222;font-weight:bold;letter-spacing:-0.1px">120</div>
<div class="t" style="left:648.0899999999999px;top:191px;font-size:9.6px;color:#222;font-weight:bold;letter-spacing:-0.1px">130</div>
<div class="t" style="left:689.42px;top:191px;font-size:9.6px;color:#222;font-weight:bold;letter-spacing:-0.1px">140</div>
<div class="t" style="left:730.75px;top:191px;font-size:9.6px;color:#222;font-weight:bold;letter-spacing:-0.1px">150</div>
<div class="t" style="left:772.0799999999999px;top:191px;font-size:9.6px;color:#222;font-weight:bold;letter-spacing:-0.1px">160</div>
<div class="t" style="left:813.41px;top:191px;font-size:9.6px;color:#222;font-weight:bold;letter-spacing:-0.1px">170</div>
<div class="t" style="left:854.74px;top:191px;font-size:9.6px;color:#222;font-weight:bold;letter-spacing:-0.1px">180</div>
<div class="t" style="left:896.0699999999999px;top:191px;font-size:9.6px;color:#222;font-weight:bold;letter-spacing:-0.1px">190</div>
<div class="t" style="left:937.4px;top:191px;font-size:9.6px;color:#222;font-weight:bold;letter-spacing:-0.1px">200</div>
<div class="t" style="left:978.7299999999999px;top:191px;font-size:9.6px;color:#222;font-weight:bold;letter-spacing:-0.1px">210</div>
<div class="t" style="left:1020.06px;top:191px;font-size:9.6px;color:#222;font-weight:bold;letter-spacing:-0.1px">220</div>
<div class="t" style="left:1061.39px;top:191px;font-size:9.6px;color:#222;font-weight:bold;letter-spacing:-0.1px">230</div>
<div class="t" style="left:1102.72px;top:191px;font-size:9.6px;color:#222;font-weight:bold;letter-spacing:-0.1px">240</div>
<div class="a" style="left:362.5px;top:188.5px;width:5px;height:33px;background:#f01010"></div>
<svg style="left:0px;top:0px;" width="120" height="788" viewBox="0 0 120 788"><rect x="78.5" y="221.2" width="30.0" height="1.3" fill="#111"/><rect x="99.5" y="225.3" width="9.0" height="1.3" fill="#111"/><rect x="99.5" y="229.5" width="9.0" height="1.3" fill="#111"/><rect x="99.5" y="233.6" width="9.0" height="1.3" fill="#111"/><rect x="99.5" y="237.7" width="9.0" height="1.3" fill="#111"/><rect x="92" y="241.9" width="16.5" height="1.3" fill="#111"/><rect x="99.5" y="246.0" width="9.0" height="1.3" fill="#111"/><rect x="99.5" y="250.1" width="9.0" height="1.3" fill="#111"/><rect x="99.5" y="254.2" width="9.0" height="1.3" fill="#111"/><rect x="99.5" y="258.4" width="9.0" height="1.3" fill="#111"/><rect x="78.5" y="262.5" width="30.0" height="1.3" fill="#111"/><rect x="99.5" y="266.6" width="9.0" height="1.3" fill="#111"/><rect x="99.5" y="270.8" width="9.0" height="1.3" fill="#111"/><rect x="99.5" y="274.9" width="9.0" height="1.3" fill="#111"/><rect x="99.5" y="279.0" width="9.0" height="1.3" fill="#111"/><rect x="92" y="283.1" width="16.5" height="1.3" fill="#111"/><rect x="99.5" y="287.3" width="9.0" height="1.3" fill="#111"/><rect x="99.5" y="291.4" width="9.0" height="1.3" fill="#111"/><rect x="99.5" y="295.5" width="9.0" height="1.3" fill="#111"/><rect x="99.5" y="299.7" width="9.0" height="1.3" fill="#111"/><rect x="78.5" y="303.8" width="30.0" height="1.3" fill="#111"/><rect x="99.5" y="307.9" width="9.0" height="1.3" fill="#111"/><rect x="99.5" y="312.1" width="9.0" height="1.3" fill="#111"/><rect x="99.5" y="316.2" width="9.0" height="1.3" fill="#111"/><rect x="99.5" y="320.3" width="9.0" height="1.3" fill="#111"/><rect x="92" y="324.4" width="16.5" height="1.3" fill="#111"/><rect x="99.5" y="328.6" width="9.0" height="1.3" fill="#111"/><rect x="99.5" y="332.7" width="9.0" height="1.3" fill="#111"/><rect x="99.5" y="336.8" width="9.0" height="1.3" fill="#111"/><rect x="99.5" y="341.0" width="9.0" height="1.3" fill="#111"/><rect x="78.5" y="345.1" width="30.0" height="1.3" fill="#111"/><rect x="99.5" y="349.2" width="9.0" height="1.3" fill="#111"/><rect x="99.5" y="353.4" width="9.0" height="1.3" fill="#111"/><rect x="99.5" y="357.5" width="9.0" height="1.3" fill="#111"/><rect x="99.5" y="361.6" width="9.0" height="1.3" fill="#111"/><rect x="92" y="365.8" width="16.5" height="1.3" fill="#111"/><rect x="99.5" y="369.9" width="9.0" height="1.3" fill="#111"/><rect x="99.5" y="374.0" width="9.0" height="1.3" fill="#111"/><rect x="99.5" y="378.1" width="9.0" height="1.3" fill="#111"/><rect x="99.5" y="382.3" width="9.0" height="1.3" fill="#111"/><rect x="78.5" y="386.4" width="30.0" height="1.3" fill="#111"/><rect x="99.5" y="390.5" width="9.0" height="1.3" fill="#111"/><rect x="99.5" y="394.7" width="9.0" height="1.3" fill="#111"/><rect x="99.5" y="398.8" width="9.0" height="1.3" fill="#111"/><rect x="99.5" y="402.9" width="9.0" height="1.3" fill="#111"/><rect x="92" y="407.0" width="16.5" height="1.3" fill="#111"/><rect x="99.5" y="411.2" width="9.0" height="1.3" fill="#111"/><rect x="99.5" y="415.3" width="9.0" height="1.3" fill="#111"/><rect x="99.5" y="419.4" width="9.0" height="1.3" fill="#111"/><rect x="99.5" y="423.6" width="9.0" height="1.3" fill="#111"/><rect x="78.5" y="427.7" width="30.0" height="1.3" fill="#111"/><rect x="99.5" y="431.8" width="9.0" height="1.3" fill="#111"/><rect x="99.5" y="436.0" width="9.0" height="1.3" fill="#111"/><rect x="99.5" y="440.1" width="9.0" height="1.3" fill="#111"/><rect x="99.5" y="444.2" width="9.0" height="1.3" fill="#111"/><rect x="92" y="448.4" width="16.5" height="1.3" fill="#111"/><rect x="99.5" y="452.5" width="9.0" height="1.3" fill="#111"/><rect x="99.5" y="456.6" width="9.0" height="1.3" fill="#111"/><rect x="99.5" y="460.7" width="9.0" height="1.3" fill="#111"/><rect x="99.5" y="464.9" width="9.0" height="1.3" fill="#111"/><rect x="78.5" y="469.0" width="30.0" height="1.3" fill="#111"/><rect x="99.5" y="473.1" width="9.0" height="1.3" fill="#111"/><rect x="99.5" y="477.3" width="9.0" height="1.3" fill="#111"/><rect x="99.5" y="481.4" width="9.0" height="1.3" fill="#111"/><rect x="99.5" y="485.5" width="9.0" height="1.3" fill="#111"/><rect x="92" y="489.6" width="16.5" height="1.3" fill="#111"/><rect x="99.5" y="493.8" width="9.0" height="1.3" fill="#111"/><rect x="99.5" y="497.9" width="9.0" height="1.3" fill="#111"/><rect x="99.5" y="502.0" width="9.0" height="1.3" fill="#111"/><rect x="99.5" y="506.2" width="9.0" height="1.3" fill="#111"/><rect x="78.5" y="510.3" width="30.0" height="1.3" fill="#111"/><rect x="99.5" y="514.4" width="9.0" height="1.3" fill="#111"/><rect x="99.5" y="518.6" width="9.0" height="1.3" fill="#111"/><rect x="99.5" y="522.7" width="9.0" height="1.3" fill="#111"/><rect x="99.5" y="526.8" width="9.0" height="1.3" fill="#111"/><rect x="92" y="530.9" width="16.5" height="1.3" fill="#111"/><rect x="99.5" y="535.1" width="9.0" height="1.3" fill="#111"/><rect x="99.5" y="539.2" width="9.0" height="1.3" fill="#111"/><rect x="99.5" y="543.3" width="9.0" height="1.3" fill="#111"/><rect x="99.5" y="547.5" width="9.0" height="1.3" fill="#111"/><rect x="78.5" y="551.6" width="30.0" height="1.3" fill="#111"/><rect x="99.5" y="555.7" width="9.0" height="1.3" fill="#111"/><rect x="99.5" y="559.9" width="9.0" height="1.3" fill="#111"/><rect x="99.5" y="564.0" width="9.0" height="1.3" fill="#111"/><rect x="99.5" y="568.1" width="9.0" height="1.3" fill="#111"/><rect x="92" y="572.2" width="16.5" height="1.3" fill="#111"/><rect x="99.5" y="576.4" width="9.0" height="1.3" fill="#111"/><rect x="99.5" y="580.5" width="9.0" height="1.3" fill="#111"/><rect x="99.5" y="584.6" width="9.0" height="1.3" fill="#111"/><rect x="99.5" y="588.8" width="9.0" height="1.3" fill="#111"/><rect x="78.5" y="592.9" width="30.0" height="1.3" fill="#111"/><rect x="99.5" y="597.0" width="9.0" height="1.3" fill="#111"/><rect x="99.5" y="601.2" width="9.0" height="1.3" fill="#111"/><rect x="99.5" y="605.3" width="9.0" height="1.3" fill="#111"/><rect x="99.5" y="609.4" width="9.0" height="1.3" fill="#111"/><rect x="92" y="613.5" width="16.5" height="1.3" fill="#111"/><rect x="99.5" y="617.7" width="9.0" height="1.3" fill="#111"/><rect x="99.5" y="621.8" width="9.0" height="1.3" fill="#111"/><rect x="99.5" y="625.9" width="9.0" height="1.3" fill="#111"/><rect x="99.5" y="630.1" width="9.0" height="1.3" fill="#111"/><rect x="78.5" y="634.2" width="30.0" height="1.3" fill="#111"/><rect x="99.5" y="638.3" width="9.0" height="1.3" fill="#111"/><rect x="99.5" y="642.5" width="9.0" height="1.3" fill="#111"/><rect x="99.5" y="646.6" width="9.0" height="1.3" fill="#111"/><rect x="99.5" y="650.7" width="9.0" height="1.3" fill="#111"/><rect x="92" y="654.9" width="16.5" height="1.3" fill="#111"/><rect x="99.5" y="659.0" width="9.0" height="1.3" fill="#111"/><rect x="99.5" y="663.1" width="9.0" height="1.3" fill="#111"/><rect x="99.5" y="667.2" width="9.0" height="1.3" fill="#111"/><rect x="99.5" y="671.4" width="9.0" height="1.3" fill="#111"/><rect x="78.5" y="675.5" width="30.0" height="1.3" fill="#111"/><rect x="99.5" y="679.6" width="9.0" height="1.3" fill="#111"/><rect x="99.5" y="683.8" width="9.0" height="1.3" fill="#111"/><rect x="99.5" y="687.9" width="9.0" height="1.3" fill="#111"/><rect x="99.5" y="692.0" width="9.0" height="1.3" fill="#111"/><rect x="92" y="696.1" width="16.5" height="1.3" fill="#111"/><rect x="99.5" y="700.3" width="9.0" height="1.3" fill="#111"/><rect x="99.5" y="704.4" width="9.0" height="1.3" fill="#111"/><rect x="99.5" y="708.5" width="9.0" height="1.3" fill="#111"/><rect x="99.5" y="712.7" width="9.0" height="1.3" fill="#111"/><rect x="78.5" y="716.8" width="30.0" height="1.3" fill="#111"/><rect x="99.5" y="720.9" width="9.0" height="1.3" fill="#111"/><rect x="99.5" y="725.1" width="9.0" height="1.3" fill="#111"/><rect x="99.5" y="729.2" width="9.0" height="1.3" fill="#111"/><rect x="99.5" y="733.3" width="9.0" height="1.3" fill="#111"/><rect x="92" y="737.4" width="16.5" height="1.3" fill="#111"/><rect x="99.5" y="741.6" width="9.0" height="1.3" fill="#111"/><rect x="99.5" y="745.7" width="9.0" height="1.3" fill="#111"/><rect x="99.5" y="749.8" width="9.0" height="1.3" fill="#111"/><rect x="99.5" y="754.0" width="9.0" height="1.3" fill="#111"/><rect x="107.6" y="221" width="1.6" height="537" fill="#111"/><rect x="78.500" y="756.800" width="30" height="1.300" fill="#111"/></svg>
<div class="t" style="left:78px;top:224.0px;font-size:9.6px;color:#222;font-weight:bold;letter-spacing:-0.1px">0mm</div>
<div class="t" style="left:78px;top:265.3px;font-size:9.6px;color:#222;font-weight:bold;letter-spacing:-0.1px">10</div>
<div class="t" style="left:78px;top:306.59999999999997px;font-size:9.6px;color:#222;font-weight:bold;letter-spacing:-0.1px">20</div>
<div class="t" style="left:78px;top:347.9px;font-size:9.6px;color:#222;font-weight:bold;letter-spacing:-0.1px">30</div>
<div class="t" style="left:78px;top:389.2px;font-size:9.6px;color:#222;font-weight:bold;letter-spacing:-0.1px">40</div>
<div class="t" style="left:78px;top:430.5px;font-size:9.6px;color:#222;font-weight:bold;letter-spacing:-0.1px">50</div>
<div class="t" style="left:78px;top:471.8px;font-size:9.6px;color:#222;font-weight:bold;letter-spacing:-0.1px">60</div>
<div class="t" style="left:78px;top:513.1px;font-size:9.6px;color:#222;font-weight:bold;letter-spacing:-0.1px">70</div>
<div class="t" style="left:78px;top:554.4000000000001px;font-size:9.6px;color:#222;font-weight:bold;letter-spacing:-0.1px">80</div>
<div class="t" style="left:78px;top:595.7px;font-size:9.6px;color:#222;font-weight:bold;letter-spacing:-0.1px">90</div>
<div class="t" style="left:78px;top:637.0px;font-size:9.6px;color:#222;font-weight:bold;letter-spacing:-0.1px">100</div>
<div class="t" style="left:78px;top:678.3000000000001px;font-size:9.6px;color:#222;font-weight:bold;letter-spacing:-0.1px">110</div>
<div class="t" style="left:78px;top:719.6px;font-size:9.6px;color:#222;font-weight:bold;letter-spacing:-0.1px">120</div>
<div class="a" style="left:75.5px;top:237.7px;width:33px;height:4.7px;background:#f01010"></div>
<div class="a" style="left:109px;top:222.6px;width:331px;height:411.4px;background:#dbdbdb"></div>
<div class="a" style="left:117px;top:229.5px;width:316px;height:399px;background:#fff"></div>
<svg style="left:117px;top:229.5px;" width="316" height="399" viewBox="0 0 316 399"><rect x="0.7" y="0.7" width="314.6" height="397.6" fill="none" stroke="#7c7c7c" stroke-width="1.3" stroke-dasharray="6.5 3"/></svg>
<div class="a" style="left:177px;top:242.6px;width:140px;height:1px;background:#a8acb4"></div>
<div class="a" style="left:177px;top:242.6px;width:1px;height:32px;background:#a8acb4"></div>
<svg style="left:180.5px;top:245.5px;" width="44" height="27" viewBox="0 0 44 27"><rect x="0" y="0" width="4" height="26.5" fill="#5d6cab"/><rect x="6.5" y="0" width="3.3" height="26.5" fill="#5d6cab"/><path d="M12.5 0H30A13.2 13.2 0 0 1 30 26.5H20V20H29.500A6.700 6.700 0 0 0 29.500 6.600H19.500V26.500H12.500Z" fill="#5d6cab"/><path d="M20 9.500H27A5 5 0 0 1 31 17" fill="none" stroke="#5d6cab" stroke-width="1.600"/></svg>
<div class="t" style="left:228.5px;top:244.3px;font-size:20.6px;color:#111;font-weight:bold;transform-origin:0 50%;transform:scaleY(.78)">平宇码创</div>
<div class="t" style="left:226px;top:263.5px;font-size:6.4px;color:#8890a8;letter-spacing:0.42px">PINGYU CODE CREATION</div>
<div class="a" style="left:132px;top:283px;width:208px;height:35px;background:#f3f3f3"></div>
<div class="t" style="left:135px;top:288.5px;font-size:21px;color:#0a0a0a;font-weight:bold;transform-origin:0 0;transform:scaleX(.725)">SSCC</div>
<div class="t" style="left:190px;top:288px;font-size:21.2px;color:#0a0a0a;font-weight:bold">货运标签单制作</div>
<div class="a" style="left:132px;top:319px;width:206px;height:1.3px;background:#8a8a8a"></div>
<div class="t" style="left:134px;top:325px;font-size:13px;color:#777;font-family:'Liberation Serif',serif;letter-spacing:1px">GTIN</div>
<div class="a" style="left:132px;top:340px;width:160px;height:26px;background:#f5f5f5"></div>
<div class="t" style="left:135px;top:342px;font-size:22px;color:#0a0a0a;font-weight:bold;transform-origin:0 0;transform:scaleX(.905)">06975843360113</div>
<div class="a" style="left:132px;top:376px;width:206px;height:1.3px;background:#8a8a8a"></div>
<div class="t" style="left:134px;top:387px;font-size:13px;color:#777;font-family:'Liberation Serif',serif;letter-spacing:1px">SSCC</div>
<div class="a" style="left:132px;top:406px;width:204px;height:26px;background:#f5f5f5"></div>
<div class="t" style="left:135px;top:408px;font-size:22px;color:#0a0a0a;font-weight:bold;transform-origin:0 0;transform:scaleX(.905)">369758433606420015</div>
<div class="a" style="left:132px;top:437px;width:206px;height:1.3px;background:#8a8a8a"></div>
<svg style="left:0px;top:0px;" width="420" height="450" viewBox="0 0 420 450"><rect x="365" y="258.0" width="39" height="2" fill="#111"/><rect x="365" y="262.0" width="39" height="2" fill="#111"/><rect x="365" y="266.0" width="39" height="3" fill="#111"/><rect x="365" y="271.0" width="39" height="1" fill="#111"/><rect x="365" y="273.0" width="39" height="3" fill="#111"/><rect x="365" y="278.0" width="39" height="4" fill="#111"/><rect x="365" y="284.0" width="39" height="1" fill="#111"/><rect x="365" y="286.0" width="39" height="2" fill="#111"/><rect x="365" y="289.0" width="39" height="1" fill="#111"/><rect x="365" y="291.0" width="39" height="3" fill="#111"/><rect x="365" y="295.0" width="39" height="3" fill="#111"/><rect x="365" y="300.0" width="39" height="2" fill="#111"/><rect x="365" y="304.0" width="39" height="4" fill="#111"/><rect x="365" y="309.0" width="39" height="3" fill="#111"/><rect x="365" y="313.0" width="39" height="3" fill="#111"/><rect x="365" y="317.0" width="39" height="1" fill="#111"/><rect x="365" y="319.0" width="39" height="1" fill="#111"/><rect x="365" y="321.0" width="39" height="3" fill="#111"/><rect x="365" y="325.0" width="39" height="2" fill="#111"/><rect x="365" y="328.0" width="39" height="2" fill="#111"/><rect x="365" y="332.0" width="39" height="1" fill="#111"/><rect x="381" y="335.0" width="17" height="1" fill="#111"/><rect x="381" y="337.0" width="17" height="2" fill="#111"/><rect x="381" y="340.0" width="17" height="4" fill="#111"/><rect x="381" y="345.0" width="17" height="2" fill="#111"/><rect x="381" y="348.0" width="17" height="2" fill="#111"/><rect x="365" y="352.0" width="39" height="1" fill="#111"/><rect x="365" y="354.0" width="39" height="2" fill="#111"/><rect x="365" y="357.0" width="39" height="3" fill="#111"/><rect x="365" y="361.0" width="39" height="1" fill="#111"/><rect x="365" y="363.0" width="39" height="3" fill="#111"/><rect x="365" y="367.0" width="39" height="2" fill="#111"/><rect x="365" y="370.0" width="39" height="2" fill="#111"/><rect x="365" y="374.0" width="39" height="1" fill="#111"/><rect x="365" y="376.0" width="39" height="4" fill="#111"/><rect x="365" y="381.0" width="39" height="1" fill="#111"/><rect x="365" y="383.0" width="39" height="1" fill="#111"/><rect x="365" y="386.0" width="39" height="2" fill="#111"/><rect x="365" y="390.0" width="39" height="2" fill="#111"/><rect x="365" y="393.0" width="39" height="3" fill="#111"/><rect x="365" y="397.0" width="39" height="4" fill="#111"/><rect x="365" y="402.0" width="39" height="2" fill="#111"/><rect x="365" y="405.0" width="39" height="2" fill="#111"/><rect x="365" y="408.0" width="39" height="1" fill="#111"/><rect x="365" y="411.0" width="39" height="1" fill="#111"/><rect x="365" y="413.0" width="39" height="1" fill="#111"/><rect x="365" y="415.0" width="39" height="1" fill="#111"/><rect x="365" y="417.0" width="39" height="2" fill="#111"/><rect x="365" y="421.0" width="39" height="1" fill="#111"/><rect x="365" y="424.0" width="39" height="1" fill="#111"/></svg>
<div class="a" style="left:364px;top:240px;width:50.5px;height:16px;background:#0f8011"></div>
<div class="a" style="left:364px;top:332.5px;width:16px;height:16.5px;background:#0f8011"></div>
<div class="a" style="left:398px;top:332.5px;width:16.5px;height:16.5px;background:#0f8011"></div>
<div class="a" style="left:364px;top:426px;width:50.5px;height:16px;background:#0f8011"></div>
<div class="a" style="left:397px;top:242px;width:1px;height:14px;border-left:1px dotted #fff"></div>
<div class="a" style="left:397px;top:428px;width:1px;height:14px;border-left:1px dotted #fff"></div>
<div class="t" style="left:405px;top:426px;font-size:6.5px;color:#222;transform-origin:0 0;transform:rotate(-90deg);letter-spacing:0.9px;font-weight:bold">1106901234560015</div>
<div class="t" style="left:405px;top:332px;font-size:6.5px;color:#222;transform-origin:0 0;transform:rotate(-90deg);letter-spacing:1.35px;font-weight:bold">369758433606420</div>
<svg style="left:0px;top:0px;" width="460" height="640" viewBox="0 0 460 640"><rect x="194" y="455.5" width="1" height="27.5" fill="#0c0c0c"/><rect x="197" y="455.5" width="2" height="27.5" fill="#0c0c0c"/><rect x="200" y="455.5" width="1" height="27.5" fill="#0c0c0c"/><rect x="203" y="455.5" width="2" height="27.5" fill="#0c0c0c"/><rect x="208" y="455.5" width="2" height="27.5" fill="#0c0c0c"/><rect x="211" y="455.5" width="2" height="27.5" fill="#0c0c0c"/><rect x="214" y="455.5" width="4" height="27.5" fill="#0c0c0c"/><rect x="220" y="455.5" width="1" height="27.5" fill="#0c0c0c"/><rect x="223" y="455.5" width="1" height="27.5" fill="#0c0c0c"/><rect x="225" y="455.5" width="3" height="27.5" fill="#0c0c0c"/><rect x="230" y="455.5" width="2" height="27.5" fill="#0c0c0c"/><rect x="234" y="455.5" width="2" height="27.5" fill="#0c0c0c"/><rect x="238" y="455.5" width="3" height="27.5" fill="#0c0c0c"/><rect x="242" y="455.5" width="1" height="27.5" fill="#0c0c0c"/><rect x="246" y="455.5" width="1" height="27.5" fill="#0c0c0c"/><rect x="249" y="455.5" width="2" height="27.5" fill="#0c0c0c"/><rect x="254" y="455.5" width="1" height="27.5" fill="#0c0c0c"/><rect x="258" y="455.5" width="4" height="27.5" fill="#0c0c0c"/><rect x="263" y="455.5" width="1" height="27.5" fill="#0c0c0c"/><rect x="266" y="455.5" width="1" height="27.5" fill="#0c0c0c"/><rect x="268" y="455.5" width="4" height="27.5" fill="#0c0c0c"/><rect x="273" y="455.5" width="4" height="27.5" fill="#0c0c0c"/><rect x="278" y="455.5" width="2" height="27.5" fill="#0c0c0c"/><rect x="282" y="455.5" width="3" height="27.5" fill="#0c0c0c"/><rect x="287" y="455.5" width="3" height="27.5" fill="#0c0c0c"/><rect x="292" y="455.5" width="2" height="27.5" fill="#0c0c0c"/><rect x="297" y="455.5" width="4" height="27.5" fill="#0c0c0c"/><rect x="303" y="455.5" width="2" height="27.5" fill="#0c0c0c"/><rect x="306" y="455.5" width="1" height="27.5" fill="#0c0c0c"/><rect x="308" y="455.5" width="1" height="27.5" fill="#0c0c0c"/><rect x="310" y="455.5" width="2" height="27.5" fill="#0c0c0c"/><rect x="313" y="455.5" width="1" height="27.5" fill="#0c0c0c"/><rect x="189" y="455.5" width="1" height="34" fill="#0c0c0c"/><rect x="191" y="455.5" width="1" height="34" fill="#0c0c0c"/><rect x="252" y="455.5" width="1" height="34" fill="#0c0c0c"/><rect x="254" y="455.5" width="1" height="34" fill="#0c0c0c"/><rect x="316" y="455.5" width="1" height="34" fill="#0c0c0c"/><rect x="318" y="455.5" width="1" height="34" fill="#0c0c0c"/><rect x="154" y="504" width="2" height="41" fill="#0c0c0c"/><rect x="157" y="504" width="3" height="41" fill="#0c0c0c"/><rect x="161" y="504" width="4" height="41" fill="#0c0c0c"/><rect x="168" y="504" width="4" height="41" fill="#0c0c0c"/><rect x="175" y="504" width="3" height="41" fill="#0c0c0c"/><rect x="180" y="504" width="1" height="41" fill="#0c0c0c"/><rect x="183" y="504" width="4" height="41" fill="#0c0c0c"/><rect x="188" y="504" width="3" height="41" fill="#0c0c0c"/><rect x="192" y="504" width="1" height="41" fill="#0c0c0c"/><rect x="194" y="504" width="1" height="41" fill="#0c0c0c"/><rect x="197" y="504" width="4" height="41" fill="#0c0c0c"/><rect x="202" y="504" width="2" height="41" fill="#0c0c0c"/><rect x="206" y="504" width="1" height="41" fill="#0c0c0c"/><rect x="209" y="504" width="1" height="41" fill="#0c0c0c"/><rect x="211" y="504" width="3" height="41" fill="#0c0c0c"/><rect x="215" y="504" width="2" height="41" fill="#0c0c0c"/><rect x="218" y="504" width="1" height="41" fill="#0c0c0c"/><rect x="221" y="504" width="1" height="41" fill="#0c0c0c"/><rect x="223" y="504" width="1" height="41" fill="#0c0c0c"/><rect x="226" y="504" width="2" height="41" fill="#0c0c0c"/><rect x="230" y="504" width="1" height="41" fill="#0c0c0c"/><rect x="232" y="504" width="1" height="41" fill="#0c0c0c"/><rect x="234" y="504" width="1" height="41" fill="#0c0c0c"/><rect x="236" y="504" width="1" height="41" fill="#0c0c0c"/><rect x="238" y="504" width="1" height="41" fill="#0c0c0c"/><rect x="240" y="504" width="1" height="41" fill="#0c0c0c"/><rect x="243" y="504" width="3" height="41" fill="#0c0c0c"/><rect x="249" y="504" width="1" height="41" fill="#0c0c0c"/><rect x="251" y="504" width="3" height="41" fill="#0c0c0c"/><rect x="255" y="504" width="2" height="41" fill="#0c0c0c"/><rect x="258" y="504" width="1" height="41" fill="#0c0c0c"/><rect x="260" y="504" width="2" height="41" fill="#0c0c0c"/><rect x="263" y="504" width="1" height="41" fill="#0c0c0c"/><rect x="265" y="504" width="1" height="41" fill="#0c0c0c"/><rect x="267" y="504" width="1" height="41" fill="#0c0c0c"/><rect x="270" y="504" width="2" height="41" fill="#0c0c0c"/><rect x="273" y="504" width="2" height="41" fill="#0c0c0c"/><rect x="278" y="504" width="3" height="41" fill="#0c0c0c"/><rect x="282" y="504" width="1" height="41" fill="#0c0c0c"/><rect x="284" y="504" width="1" height="41" fill="#0c0c0c"/><rect x="286" y="504" width="2" height="41" fill="#0c0c0c"/><rect x="291" y="504" width="1" height="41" fill="#0c0c0c"/><rect x="293" y="504" width="2" height="41" fill="#0c0c0c"/><rect x="297" y="504" width="3" height="41" fill="#0c0c0c"/><rect x="301" y="504" width="1" height="41" fill="#0c0c0c"/><rect x="303" y="504" width="1" height="41" fill="#0c0c0c"/><rect x="307" y="504" width="1" height="41" fill="#0c0c0c"/><rect x="310" y="504" width="1" height="41" fill="#0c0c0c"/><rect x="313" y="504" width="4" height="41" fill="#0c0c0c"/><rect x="319" y="504" width="1" height="41" fill="#0c0c0c"/><rect x="322" y="504" width="2" height="41" fill="#0c0c0c"/><rect x="325" y="504" width="2" height="41" fill="#0c0c0c"/><rect x="328" y="504" width="3" height="41" fill="#0c0c0c"/><rect x="332" y="504" width="2" height="41" fill="#0c0c0c"/><rect x="335" y="504" width="1" height="41" fill="#0c0c0c"/><rect x="337" y="504" width="4" height="41" fill="#0c0c0c"/><rect x="343" y="504" width="1" height="41" fill="#0c0c0c"/><rect x="346" y="504" width="1" height="41" fill="#0c0c0c"/><rect x="349" y="504" width="1" height="41" fill="#0c0c0c"/><rect x="135" y="568.5" width="2" height="32.5" fill="#0c0c0c"/><rect x="139" y="568.5" width="1" height="32.5" fill="#0c0c0c"/><rect x="141" y="568.5" width="1" height="32.5" fill="#0c0c0c"/><rect x="143" y="568.5" width="4" height="32.5" fill="#0c0c0c"/><rect x="150" y="568.5" width="1" height="32.5" fill="#0c0c0c"/><rect x="152" y="568.5" width="2" height="32.5" fill="#0c0c0c"/><rect x="156" y="568.5" width="2" height="32.5" fill="#0c0c0c"/><rect x="159" y="568.5" width="1" height="32.5" fill="#0c0c0c"/><rect x="162" y="568.5" width="2" height="32.5" fill="#0c0c0c"/><rect x="167" y="568.5" width="1" height="32.5" fill="#0c0c0c"/><rect x="171" y="568.5" width="2" height="32.5" fill="#0c0c0c"/><rect x="174" y="568.5" width="3" height="32.5" fill="#0c0c0c"/><rect x="179" y="568.5" width="3" height="32.5" fill="#0c0c0c"/><rect x="184" y="568.5" width="1" height="32.5" fill="#0c0c0c"/><rect x="186" y="568.5" width="1" height="32.5" fill="#0c0c0c"/><rect x="188" y="568.5" width="1" height="32.5" fill="#0c0c0c"/><rect x="190" y="568.5" width="2" height="32.5" fill="#0c0c0c"/><rect x="194" y="568.5" width="1" height="32.5" fill="#0c0c0c"/><rect x="198" y="568.5" width="2" height="32.5" fill="#0c0c0c"/><rect x="203" y="568.5" width="1" height="32.5" fill="#0c0c0c"/><rect x="205" y="568.5" width="1" height="32.5" fill="#0c0c0c"/><rect x="209" y="568.5" width="1" height="32.5" fill="#0c0c0c"/><rect x="213" y="568.5" width="4" height="32.5" fill="#0c0c0c"/><rect x="219" y="568.5" width="1" height="32.5" fill="#0c0c0c"/><rect x="221" y="568.5" width="1" height="32.5" fill="#0c0c0c"/><rect x="224" y="568.5" width="1" height="32.5" fill="#0c0c0c"/><rect x="226" y="568.5" width="4" height="32.5" fill="#0c0c0c"/><rect x="231" y="568.5" width="1" height="32.5" fill="#0c0c0c"/><rect x="235" y="568.5" width="1" height="32.5" fill="#0c0c0c"/><rect x="238" y="568.5" width="1" height="32.5" fill="#0c0c0c"/><rect x="241" y="568.5" width="4" height="32.5" fill="#0c0c0c"/><rect x="247" y="568.5" width="1" height="32.5" fill="#0c0c0c"/><rect x="249" y="568.5" width="1" height="32.5" fill="#0c0c0c"/><rect x="252" y="568.5" width="3" height="32.5" fill="#0c0c0c"/><rect x="256" y="568.5" width="2" height="32.5" fill="#0c0c0c"/><rect x="259" y="568.5" width="1" height="32.5" fill="#0c0c0c"/><rect x="262" y="568.5" width="1" height="32.5" fill="#0c0c0c"/><rect x="264" y="568.5" width="1" height="32.5" fill="#0c0c0c"/><rect x="266" y="568.5" width="1" height="32.5" fill="#0c0c0c"/><rect x="268" y="568.5" width="2" height="32.5" fill="#0c0c0c"/><rect x="271" y="568.5" width="2" height="32.5" fill="#0c0c0c"/><rect x="274" y="568.5" width="2" height="32.5" fill="#0c0c0c"/><rect x="278" y="568.5" width="2" height="32.5" fill="#0c0c0c"/><rect x="281" y="568.5" width="2" height="32.5" fill="#0c0c0c"/><rect x="284" y="568.5" width="2" height="32.5" fill="#0c0c0c"/><rect x="287" y="568.5" width="3" height="32.5" fill="#0c0c0c"/><rect x="291" y="568.5" width="3" height="32.5" fill="#0c0c0c"/><rect x="296" y="568.5" width="1" height="32.5" fill="#0c0c0c"/><rect x="298" y="568.5" width="2" height="32.5" fill="#0c0c0c"/><rect x="303" y="568.5" width="1" height="32.5" fill="#0c0c0c"/><rect x="305" y="568.5" width="1" height="32.5" fill="#0c0c0c"/><rect x="308" y="568.5" width="3" height="32.5" fill="#0c0c0c"/><rect x="313" y="568.5" width="4" height="32.5" fill="#0c0c0c"/><rect x="318" y="568.5" width="3" height="32.5" fill="#0c0c0c"/><rect x="322" y="568.5" width="3" height="32.5" fill="#0c0c0c"/><rect x="327" y="568.5" width="1" height="32.5" fill="#0c0c0c"/><rect x="329" y="568.5" width="4" height="32.5" fill="#0c0c0c"/><rect x="336" y="568.5" width="2" height="32.5" fill="#0c0c0c"/><rect x="339" y="568.5" width="1" height="32.5" fill="#0c0c0c"/><rect x="342" y="568.5" width="2" height="32.5" fill="#0c0c0c"/><rect x="345" y="568.5" width="3" height="32.5" fill="#0c0c0c"/><rect x="349" y="568.5" width="4" height="32.5" fill="#0c0c0c"/><rect x="356" y="568.5" width="2" height="32.5" fill="#0c0c0c"/><rect x="360" y="568.5" width="2" height="32.5" fill="#0c0c0c"/><rect x="365" y="568.5" width="1" height="32.5" fill="#0c0c0c"/><rect x="367" y="568.5" width="1" height="32.5" fill="#0c0c0c"/><rect x="370" y="568.5" width="1" height="32.5" fill="#0c0c0c"/><rect x="373" y="568.5" width="1" height="32.5" fill="#0c0c0c"/><rect x="376" y="568.5" width="1" height="32.5" fill="#0c0c0c"/><rect x="379" y="568.5" width="3" height="32.5" fill="#0c0c0c"/><rect x="383" y="568.5" width="2" height="32.5" fill="#0c0c0c"/><rect x="387" y="568.5" width="1" height="32.5" fill="#0c0c0c"/><rect x="389" y="568.5" width="2" height="32.5" fill="#0c0c0c"/><rect x="392" y="568.5" width="1" height="32.5" fill="#0c0c0c"/><rect x="394" y="568.5" width="2" height="32.5" fill="#0c0c0c"/></svg>
<div class="t" style="left:180px;top:483.5px;font-size:12px;color:#111;font-family:'Liberation Mono',monospace;">6</div>
<div class="t" style="left:195.8px;top:483.5px;font-size:12px;color:#111;font-family:'Liberation Mono',monospace;letter-spacing:1.95px">975843</div>
<div class="t" style="left:258.6px;top:483.5px;font-size:12px;color:#111;font-family:'Liberation Mono',monospace;letter-spacing:1.95px">360113</div>
<div class="t" style="left:322px;top:483.5px;font-size:12px;color:#111;font-family:'Liberation Mono',monospace;">&gt;</div>
<div class="t" style="left:160px;top:545px;font-size:13px;color:#111;letter-spacing:2.45px">(8001)04000300007600</div>
<div class="t" style="left:144px;top:601.5px;font-size:18.5px;color:#0a0a0a;font-weight:bold;letter-spacing:3.45px">(400)P070115AH1003</div>
<svg style="left:23px;top:142px;" width="12" height="15" viewBox="0 0 12 15"><path d="M0 0H8L12 4V15H0Z" fill="#f4f4f4"/><path d="M8 0V4H12Z" fill="#b8b8b8"/></svg>
<svg style="left:20px;top:177px;" width="20" height="15" viewBox="0 0 20 15"><path d="M1 2H7L9 4H16V14H1Z" fill="#e8b84a"/><path d="M0 14L4 6H19L15 14Z" fill="#f6d574"/></svg>
<svg style="left:22px;top:213px;" width="15" height="15" viewBox="0 0 15 15"><rect x="0" y="0" width="15" height="15" rx="1" fill="#5b5fc8"/><rect x="3" y="1" width="9" height="6" fill="#e8e8f4"/><rect x="4" y="10" width="7" height="5" fill="#2c2f7a"/></svg>
<svg style="left:20px;top:247px;" width="19" height="16" viewBox="0 0 19 16"><path d="M4 0H15V6H4Z" fill="#e8e8e8"/><path d="M1 6H18V13H1Z" fill="#c8c8cc"/><path d="M4 10H15V16H4Z" fill="#f4f4f4"/></svg>
<svg style="left:23px;top:291px;" width="13" height="17" viewBox="0 0 13 17"><path d="M3 0L7 8M10 0L6 8" stroke="#c8ccd8" stroke-width="1.6"/><circle cx="3.5" cy="12" r="3" fill="none" stroke="#5a78c0" stroke-width="1.8"/><circle cx="9.5" cy="12" r="3" fill="none" stroke="#5a78c0" stroke-width="1.8"/></svg>
<svg style="left:21px;top:329px;" width="17" height="16" viewBox="0 0 17 16"><path d="M0 0H8V11H0Z" fill="#e4e8f0"/><path d="M6 4H16V16H6Z" fill="#6a8ad0"/><path d="M8 7H14M8 10H14M8 13H14" stroke="#e8ecf4" stroke-width="1"/></svg>
<svg style="left:21px;top:365px;" width="17" height="17" viewBox="0 0 17 17"><path d="M0 2H13V16H0Z" fill="#d8a840"/><path d="M3 0H10V4H3Z" fill="#8a8a8a"/><path d="M7 8H17V17H7Z" fill="#f0f0f0"/><path d="M9 11H15M9 14H15" stroke="#7a8ab0" stroke-width="1"/></svg>
<svg style="left:21px;top:401px;" width="17" height="17" viewBox="0 0 17 17"><circle cx="8.5" cy="8.5" r="8" fill="#3a7ad8" stroke="#9cc0f0" stroke-width="1.2"/><text x="8.5" y="13" font-size="12" font-weight="bold" text-anchor="middle" fill="#fff" font-family="Liberation Sans">?</text></svg>
<svg style="left:13px;top:445px;" width="44" height="32" viewBox="0 0 44 32"><rect x="1.2" y="1.2" width="41.6" height="29.6" rx="2" fill="none" stroke="#0c0d0e" stroke-width="2.4"/><rect x="6.0" y="6" width="1.2" height="13" fill="#0c0d0e"/><rect x="9.6" y="6" width="2" height="13" fill="#0c0d0e"/><rect x="13.2" y="6" width="2" height="13" fill="#0c0d0e"/><rect x="16.8" y="6" width="1.2" height="13" fill="#0c0d0e"/><rect x="20.4" y="6" width="2" height="13" fill="#0c0d0e"/><rect x="24.0" y="6" width="2" height="13" fill="#0c0d0e"/><rect x="27.6" y="6" width="1.2" height="13" fill="#0c0d0e"/><rect x="31.2" y="6" width="2" height="13" fill="#0c0d0e"/><rect x="34.8" y="6" width="2" height="13" fill="#0c0d0e"/><text x="22" y="27" font-size="7" text-anchor="middle" fill="#55585a" font-family="Liberation Sans" letter-spacing="1">2390</text></svg>
<svg style="left:13px;top:486px;" width="44" height="32" viewBox="0 0 44 32"><rect x="1.5" y="1.5" width="41" height="29" rx="3" fill="none" stroke="#0c0d0e" stroke-width="3"/><path d="M11 8H33V13H25V25H19V13H11Z" fill="#0c0d0e"/></svg>
<svg style="left:14px;top:524px;" width="42" height="36" viewBox="0 0 42 36"><path d="M8 3L40 0 38 26 35 26" fill="none" stroke="#0c0d0e" stroke-width="2"/><rect x="1" y="7" width="33" height="26" rx="1" fill="#0c0d0e"/><path d="M4 28L13 17 19 23 24 19 31 28Z" fill="#3c4041"/><circle cx="26" cy="13" r="2.5" fill="#3c4041"/></svg>
<svg style="left:15px;top:565px;" width="42" height="36" viewBox="0 0 42 36"><rect x="1" y="10" width="29" height="21" rx="2" fill="none" stroke="#121314" stroke-width="1.8"/><text x="15" y="26" font-size="8.5" text-anchor="middle" fill="#6a6d6f" font-family="Liberation Sans" font-weight="bold">RFID</text><path d="M24 12A5 5 0 0 1 31 18M23 7A9.5 9.5 0 0 1 36 19M22 2.5A14 14 0 0 1 40 20" fill="none" stroke="#121314" stroke-width="2"/><circle cx="26" cy="16" r="2" fill="#121314"/></svg>
<svg style="left:15px;top:607px;" width="42" height="34" viewBox="0 0 42 34"><circle cx="11" cy="12" r="10" fill="none" stroke="#151617" stroke-width="1.6"/><rect x="15" y="9" width="23" height="22" fill="#3c4041" stroke="#151617" stroke-width="1.6"/><path d="M20 10L26 22 29 26 27 19 22 9Z" fill="#151617"/><path d="M17 24L20 19 23 24Z" fill="#151617"/></svg>
<svg style="left:17px;top:651px;" width="38" height="44" viewBox="0 0 38 44"><path d="M1 1H25L37 12V43H1Z" fill="none" stroke="#121314" stroke-width="2"/><path d="M25 1V12H37" fill="none" stroke="#121314" stroke-width="2"/><circle cx="19" cy="25" r="11.5" fill="none" stroke="#121314" stroke-width="2"/><text x="19" y="30" font-size="13" text-anchor="middle" fill="#0c0d0e" font-family="Liberation Sans" font-weight="bold">F+</text></svg>
<svg style="left:19px;top:706px;" width="34" height="44" viewBox="0 0 34 44"><path d="M1.5 4A3 3 0 0 1 4.500 1.5H22L32.500 12V39A3 3 0 0 1 29.500 42.500H4.500A3 3 0 0 1 1.5 39.500Z" fill="none" stroke="#0c0d0e" stroke-width="2.6"/><path d="M21 2V13H32" fill="none" stroke="#0c0d0e" stroke-width="2.2"/><path d="M7 20H27M7 26H27M7 32H27M7 38H27" stroke="#0c0d0e" stroke-width="2.8"/></svg>
<div class="a" style="left:1394px;top:126px;width:6px;height:662px;background:#36383a"></div>
<div class="a" style="left:1141px;top:135px;width:253px;height:112px;background:#424446;border-radius:0 0 8px 8px"></div>
<div class="a" style="left:1141px;top:135px;width:253px;height:25px;background:#000"></div>
<div class="a" style="left:1141px;top:135px;width:65px;height:26px;background:#424446;border-radius:9px 9px 0 0"></div>
<div class="t" style="left:1157px;top:141px;font-size:16px;color:#fff;font-weight:bold">胶片</div>
<div class="t" style="left:1217px;top:142px;font-size:15px;color:#4a4d4f;font-weight:bold">编码</div>
<div class="t" style="left:1180px;top:171px;font-size:14.3px;color:#f0f0f0;">上海平宇码创科技有限公司</div>
<div class="a" style="left:1141px;top:250px;width:256px;height:536px;background:#404143;border-radius:8px 0 8px 8px"></div>
<div class="a" style="left:1387px;top:247.5px;width:10px;height:24.5px;background:#000"></div>
<div class="a" style="left:1387px;top:514px;width:8px;height:26px;background:#000"></div>
<div class="t" style="left:1155px;top:707px;font-size:15px;color:#fff;font-weight:bold">ID</div>
<div class="t" style="left:1155px;top:726px;font-size:14.3px;color:#f0f0f0;">控件<span style="font-size:.88em">ID</span></div>
<div class="a" style="left:442px;top:221px;width:945px;height:493px;background:#3c4041;border:1px solid #2f7fd2"></div>
<div class="a" style="left:443px;top:222px;width:943px;height:32.5px;background:#3f3f43"></div>
<div class="a" style="left:443px;top:254px;width:943px;height:9px;background:#2b2c2f"></div>
<div class="a" style="left:443px;top:706px;width:943px;height:7px;background:#2b2d2f"></div>
<svg style="left:445.3px;top:224px;" width="29.5" height="29" viewBox="0 0 29.5 29"><rect width="29.5" height="29" fill="#f6f6f6"/><rect x="3.2" y="4.5" width="2.2" height="19" fill="#222"/><rect x="6.4" y="4.5" width="1.2" height="19" fill="#555"/><rect x="8.6" y="4.5" width="3" height="19" fill="#222"/><rect x="12.6" y="4.5" width="1.4" height="19" fill="#444"/><rect x="15" y="4.5" width="2.6" height="19" fill="#222"/><rect x="18.6" y="4.5" width="1.2" height="19" fill="#555"/><rect x="20.8" y="4.5" width="2.6" height="19" fill="#222"/><rect x="24.4" y="4.5" width="1.6" height="19" fill="#333"/><rect x="6" y="24.800" width="17" height="1.600" fill="#9a9a9a"/></svg>
<div class="t" style="left:481px;top:228.2px;font-size:18.6px;color:#ececec;"><span style="font-size:.9em;letter-spacing:-1px">GS1</span>编码属性设置</div>
<div class="a" style="left:1331px;top:243px;width:12px;height:2px;background:#e8e8e8"></div>
<svg style="left:1362px;top:232px;" width="14" height="14" viewBox="0 0 14 14"><path d="M0.5 0.5L13.5 13.5M13.5 0.5L0.5 13.5" stroke="#e8e8e8" stroke-width="1.4"/></svg>
<div class="a" style="left:444px;top:263px;width:263px;height:393px;background:#3a3d3f"></div>
<div class="a" style="left:707px;top:263px;width:6px;height:443px;background:#2f3234"></div>
<div class="a" style="left:447px;top:656px;width:260px;height:7px;background:#2f3234"></div>
<div class="t" style="left:460px;top:265px;font-size:14.1px;color:#dcdcdc;">条码属性</div>
<div class="lbl" style="right:852px;top:285px;padding:0 15px 0 3px">图层名称<span style="margin-left:1.6px">:</span></div>
<div class="lbl" style="right:852px;top:314px;padding:0 15px 0 3px">条码类型<span style="margin-left:1.6px">:</span></div>
<div class="lbl" style="right:852px;top:343px;padding:0 15px 0 3px">文字显控<span style="margin-left:1.6px">:</span></div>
<div class="lbl" style="right:852px;top:372px;padding:0 15px 0 3px"><span style="font-size:0.88em">X</span>尺寸<span style="margin-left:1.6px">:</span></div>
<div class="lbl" style="right:852px;top:400px;padding:0 15px 0 3px">条码高度<span style="margin-left:1.6px">:</span></div>
<div class="lbl" style="right:852px;top:426.5px;padding:0 15px 0 3px">颜色模式<span style="margin-left:1.6px">:</span></div>
<div class="lbl" style="right:852px;top:452.5px;padding:0 15px 0 3px">条码方向<span style="margin-left:1.6px">:</span></div>
<div class="lbl" style="right:852px;top:481px;padding:0 15px 0 3px">条宽减少<span style="margin-left:1.6px">:</span></div>
<div class="inp" style="left:564px;top:283px;width:128px;height:25px;line-height:20px;">BarCode453</div>
<div class="cmb" style="left:564px;top:312px;width:128px;height:25px;line-height:20px;color:#808385;"><span style="font-size:0.9em">GS1-128</span></div>
<div class="cmb" style="left:564px;top:339.5px;width:128px;height:25px;line-height:20px;">显示文字</div>
<div class="inp spn" style="left:564px;top:367.5px;width:62px;height:24px;line-height:19px;">0.20</div>
<svg style="left:613px;top:372.5px;" width="9" height="14" viewBox="0 0 9 14"><path d="M0 5L4.5 1 9 5ZM0 9L4.5 13 9 9Z" fill="#5a5d5f"/></svg>
<div class="t" style="left:632px;top:373.5px;font-size:13.5px;color:#f0f0f0;background:#2e3032;padding:1px 4px 1px 3px">mm</div>
<div class="inp spn" style="left:564px;top:395px;width:62px;height:24px;line-height:19px;">2.50</div>
<svg style="left:613px;top:400px;" width="9" height="14" viewBox="0 0 9 14"><path d="M0 5L4.5 1 9 5ZM0 9L4.5 13 9 9Z" fill="#5a5d5f"/></svg>
<div class="t" style="left:632px;top:401px;font-size:13.5px;color:#f0f0f0;background:#2e3032;padding:1px 4px 1px 3px">mm</div>
<div class="cmb" style="left:564px;top:421px;width:63px;height:25.5px;line-height:20.5px;"><span style="font-size:0.8em">RGB</span></div>
<div class="cmb" style="left:564px;top:449.5px;width:128px;height:26px;line-height:21px;">旋转<span style="font-size:0.9em">270</span>度</div>
<div class="inp spn" style="left:564px;top:477.5px;width:62px;height:24px;line-height:19px;">0.00</div>
<svg style="left:613px;top:482.5px;" width="9" height="14" viewBox="0 0 9 14"><path d="M0 5L4.5 1 9 5ZM0 9L4.5 13 9 9Z" fill="#5a5d5f"/></svg>
<div class="t" style="left:632px;top:482px;font-size:13px;color:#f0f0f0;background:#2e3032;padding:1px 3px 1px 3px">%</div>
<svg style="left:464px;top:523px;" width="15" height="15" viewBox="0 0 15 15"><circle cx="7.2" cy="7.4" r="6.4" fill="#3c4041" stroke="#70747c" stroke-width="1.2"/><circle cx="7.2" cy="7.4" r="4.2" fill="#5068c4"/></svg>
<div class="t" style="left:484px;top:523px;font-size:14.1px;color:#f0f0f0;">可变数据</div>
<div class="t" style="left:468px;top:546px;font-size:14.1px;color:#e4e4e4;">数据源绑定设置</div>
<div class="a" style="left:457px;top:553px;width:247px;height:98px;border:1px solid #424547;border-top:0"></div>
<div class="lbl" style="right:843px;top:573px;padding:0 12px 0 3px">数据源<span style="margin-left:1.6px">:</span></div>
<div class="cmb" style="left:566px;top:570px;width:122px;height:26px;line-height:21px;"></div>
<div class="lbl" style="right:843px;top:610px;padding:0 12px 0 3px">字段<span style="margin-left:1.6px">:</span></div>
<div class="cmb" style="left:566px;top:607px;width:122px;height:26px;line-height:21px;"></div>
<div class="btn" style="left:447px;top:663px;width:57px;height:43px;line-height:42px;font-size:16px">确定</div>
<div class="btn" style="left:510px;top:663px;width:64px;height:43px;line-height:42px;font-size:16px">删除</div>
<div class="btn" style="left:581px;top:663px;width:126px;height:43px;line-height:42px;font-size:16px">导出矢量图</div>
<div class="t" style="left:727px;top:265px;font-size:14.1px;color:#dcdcdc;">条码数据设置</div>
<svg style="left:719px;top:297px;" width="15" height="15" viewBox="0 0 15 15"><circle cx="7.2" cy="7.2" r="6.4" fill="none" stroke="#dadada" stroke-width="1.3"/></svg>
<div class="t" style="left:739px;top:297px;font-size:14.1px;color:#ececec;"><span style="font-size:0.88em">GS1</span>编码内容</div>
<div class="a" style="left:722px;top:331px;width:646px;height:210px;border:1px solid #44474a"></div>
<div class="a" style="left:728px;top:350px;width:245px;height:186px;border:1px solid #44474a"></div>
<div class="a" style="left:981px;top:350px;width:378px;height:186px;border:1px solid #44474a"></div>
<div class="t" style="left:737px;top:343px;font-size:14.2px;color:#e4e4e4;background:#3c4041;padding:0 3px">产品标识</div>
<div class="lbl" style="right:572.5px;top:386px;padding:0 12px 0 3px">包装指示符<span style="margin-left:1.6px">:</span></div>
<div class="cmb" style="left:834px;top:382.5px;width:59px;height:26px;line-height:21px;">0</div>
<div class="lbl" style="right:572.5px;top:428px;padding:0 12px 0 3px">厂商识别码<span style="margin-left:1.6px">:</span></div>
<div class="inp" style="left:834px;top:423px;width:125px;height:25px;line-height:20px;">690123456</div>
<div class="lbl" style="right:572.5px;top:464px;padding:0 12px 0 3px">产品代码<span style="margin-left:1.6px">:</span></div>
<div class="inp" style="left:834px;top:461px;width:91px;height:25.5px;line-height:20.5px;">001</div>
<div class="lbl" style="right:572.5px;top:505px;padding:0 12px 0 3px">校验位<span style="margin-left:1.6px">:</span></div>
<div class="inp" style="left:834px;top:499.5px;width:53px;height:25.5px;line-height:20.5px;color:#676a6c;">5</div>
<div class="t" style="left:990px;top:343px;font-size:14.2px;color:#e4e4e4;background:#3c4041;padding:0 3px">生产标识</div>
<div class="lbl" style="right:281px;top:365.5px;padding:0 3px 0 3px">批号<span style="font-size:0.88em">LOT(10)</span></div>
<div class="inp" style="left:1130.5px;top:361.5px;width:218px;height:25px;line-height:20px;"></div>
<div class="lbl" style="right:284px;top:401.5px;padding:0 3px 0 3px">生产日期<span style="font-size:0.88em">(11)</span></div>
<div class="inp" style="left:1130.5px;top:397.5px;width:76px;height:25.5px;line-height:20.5px;"></div>
<div class="lbl" style="right:282px;top:436px;padding:0 3px 0 3px">失效日期<span style="font-size:0.88em">(17)</span></div>
<div class="inp" style="left:1130.5px;top:432.5px;width:76px;height:25.5px;line-height:20.5px;"></div>
<div class="lbl" style="right:283px;top:469px;padding:0 3px 0 3px">序列号<span style="font-size:0.88em">SN(21)</span></div>
<div class="inp" style="left:1130.5px;top:464.5px;width:218px;height:25.5px;line-height:20.5px;"></div>
<div class="lbl" style="right:283px;top:498.5px;padding:0 3px 0 3px">公司内部信息<span style="font-size:0.88em">(91)</span></div>
<div class="inp" style="left:1130.5px;top:496px;width:218px;height:25px;line-height:20px;"></div>
<div class="a" style="left:1234px;top:398px;width:114px;height:24.3px;background:#fdfdfd"></div>
<div class="t" style="left:1236px;top:403px;font-size:13.8px;color:#111;"><span style="font-size:0.84em">2026</span>年</div>
<div class="t" style="left:1283.5px;top:403px;font-size:13.8px;color:#111;"><span style="font-size:0.84em">1</span>月</div>
<div class="t" style="left:1311px;top:403px;font-size:13.8px;color:#111;"><span style="font-size:0.84em">9</span>日</div>
<svg style="left:1334px;top:408px;" width="10" height="6" viewBox="0 0 10 6"><path d="M0.5 0.5L5 5 9.5 0.5" fill="none" stroke="#333" stroke-width="1.2"/></svg>
<div class="a" style="left:1234px;top:433.3px;width:114px;height:24.3px;background:#fdfdfd"></div>
<div class="t" style="left:1236px;top:438.3px;font-size:13.8px;color:#111;"><span style="font-size:0.84em">2026</span>年</div>
<div class="t" style="left:1283.5px;top:438.3px;font-size:13.8px;color:#111;"><span style="font-size:0.84em">1</span>月</div>
<div class="t" style="left:1311px;top:438.3px;font-size:13.8px;color:#111;"><span style="font-size:0.84em">9</span>日</div>
<svg style="left:1334px;top:443.3px;" width="10" height="6" viewBox="0 0 10 6"><path d="M0.5 0.5L5 5 9.5 0.5" fill="none" stroke="#333" stroke-width="1.2"/></svg>
<div class="t" style="left:734px;top:547px;font-size:14.2px;color:#e8e8e8;">单品序列号<span style="font-size:0.88em">SN</span>批量生成规则</div>
<div class="a" style="left:720px;top:554px;width:648px;height:147px;border:1px solid #44474a;border-top:0"></div>
<div class="a" style="left:912px;top:554px;width:456px;height:1px;background:#44474a"></div>
<div class="lbl" style="right:565px;top:588.5px;padding:0 13px 0 3px">序列号起始值<span style="margin-left:1.6px">:</span></div>
<div class="inp" style="left:854px;top:586.5px;width:120px;height:24.5px;line-height:19.5px;">000001</div>
<div class="lbl" style="right:568px;top:619.5px;padding:0 13px 0 3px">序列号数量<span style="margin-left:1.6px">:</span></div>
<div class="inp spn" style="left:854px;top:617px;width:120px;height:25px;line-height:20px;">80</div>
<svg style="left:961px;top:622px;" width="9" height="15" viewBox="0 0 9 15"><path d="M0 5L4.5 1 9 5ZM0 10L4.5 14 9 10Z" fill="#5a5d5f"/></svg>
<div class="lbl" style="right:322.5px;top:588.7px;padding:0 13px 0 3px">序列号进制<span style="margin-left:1.6px">:</span></div>
<div class="cmb" style="left:1095.5px;top:585.7px;width:196px;height:25.5px;line-height:20.5px;">十进制</div>
<svg style="left:986px;top:620.8px;" width="15" height="15" viewBox="0 0 15 15"><rect x="0.8" y="0.8" width="13" height="13" fill="none" stroke="#e8e8e8" stroke-width="1.5"/><rect x="3.2" y="3.2" width="8.2" height="8.2" fill="#c4c6c8"/></svg>
<div class="t" style="left:1005.5px;top:620.5px;font-size:14.2px;color:#f0f0f0;">递增</div>
<svg style="left:1049.5px;top:620.8px;" width="15" height="15" viewBox="0 0 15 15"><rect x="0.8" y="0.8" width="13" height="13" fill="none" stroke="#e8e8e8" stroke-width="1.5"/></svg>
<div class="t" style="left:1069.5px;top:620.5px;font-size:14.2px;color:#f0f0f0;">递减</div>
<div class="lbl" style="right:229px;top:619px;padding:0 13px 0 3px">增减量<span style="margin-left:1.6px">:</span></div>
<div class="inp spn" style="left:1177.7px;top:616.8px;width:114px;height:25px;line-height:20px;">1</div>
<svg style="left:1278.7px;top:621.8px;" width="9" height="15" viewBox="0 0 9 15"><path d="M0 5L4.5 1 9 5ZM0 10L4.5 14 9 10Z" fill="#5a5d5f"/></svg>
<div class="btn" style="left:1007px;top:670.3px;width:89.5px;height:24.2px;line-height:22px;font-size:14.3px;background:#404345;border-color:#55585a">生成数据源</div>
<div class="a" style="left:1369px;top:263px;width:18px;height:443px;background:#3b3e40;border-left:1px solid #44474a"></div>
<div class="a" style="left:1386px;top:263px;width:1px;height:443px;background:#3c4041"></div>
<div class="a" style="left:1374px;top:287px;width:13px;height:28px;background:#454849;border:1px solid #54575a"></div>
<div class="a" style="left:1369px;top:263px;width:18px;height:9px;background:#323537"></div>
<div class="a" style="left:1382.3px;top:338px;width:4.4px;height:9.4px;background:#e8e8e8"></div>
<svg style="left:0px;top:0px;" width="1400" height="788" viewBox="0 0 1400 788"><polygon points="665.8,466.5 665.2,465.5 577.9,517.2 575.9,508.4 559.5,533.0 588.7,528.7 581.7,523.1" fill="#e93f46"/><polygon points="1191.9,571.5 1191.1,570.5 1098.4,640.5 1095.5,632.0 1081.8,658.2 1110.4,650.8 1102.8,646.0" fill="#e93f46"/></svg>
</body></html>
